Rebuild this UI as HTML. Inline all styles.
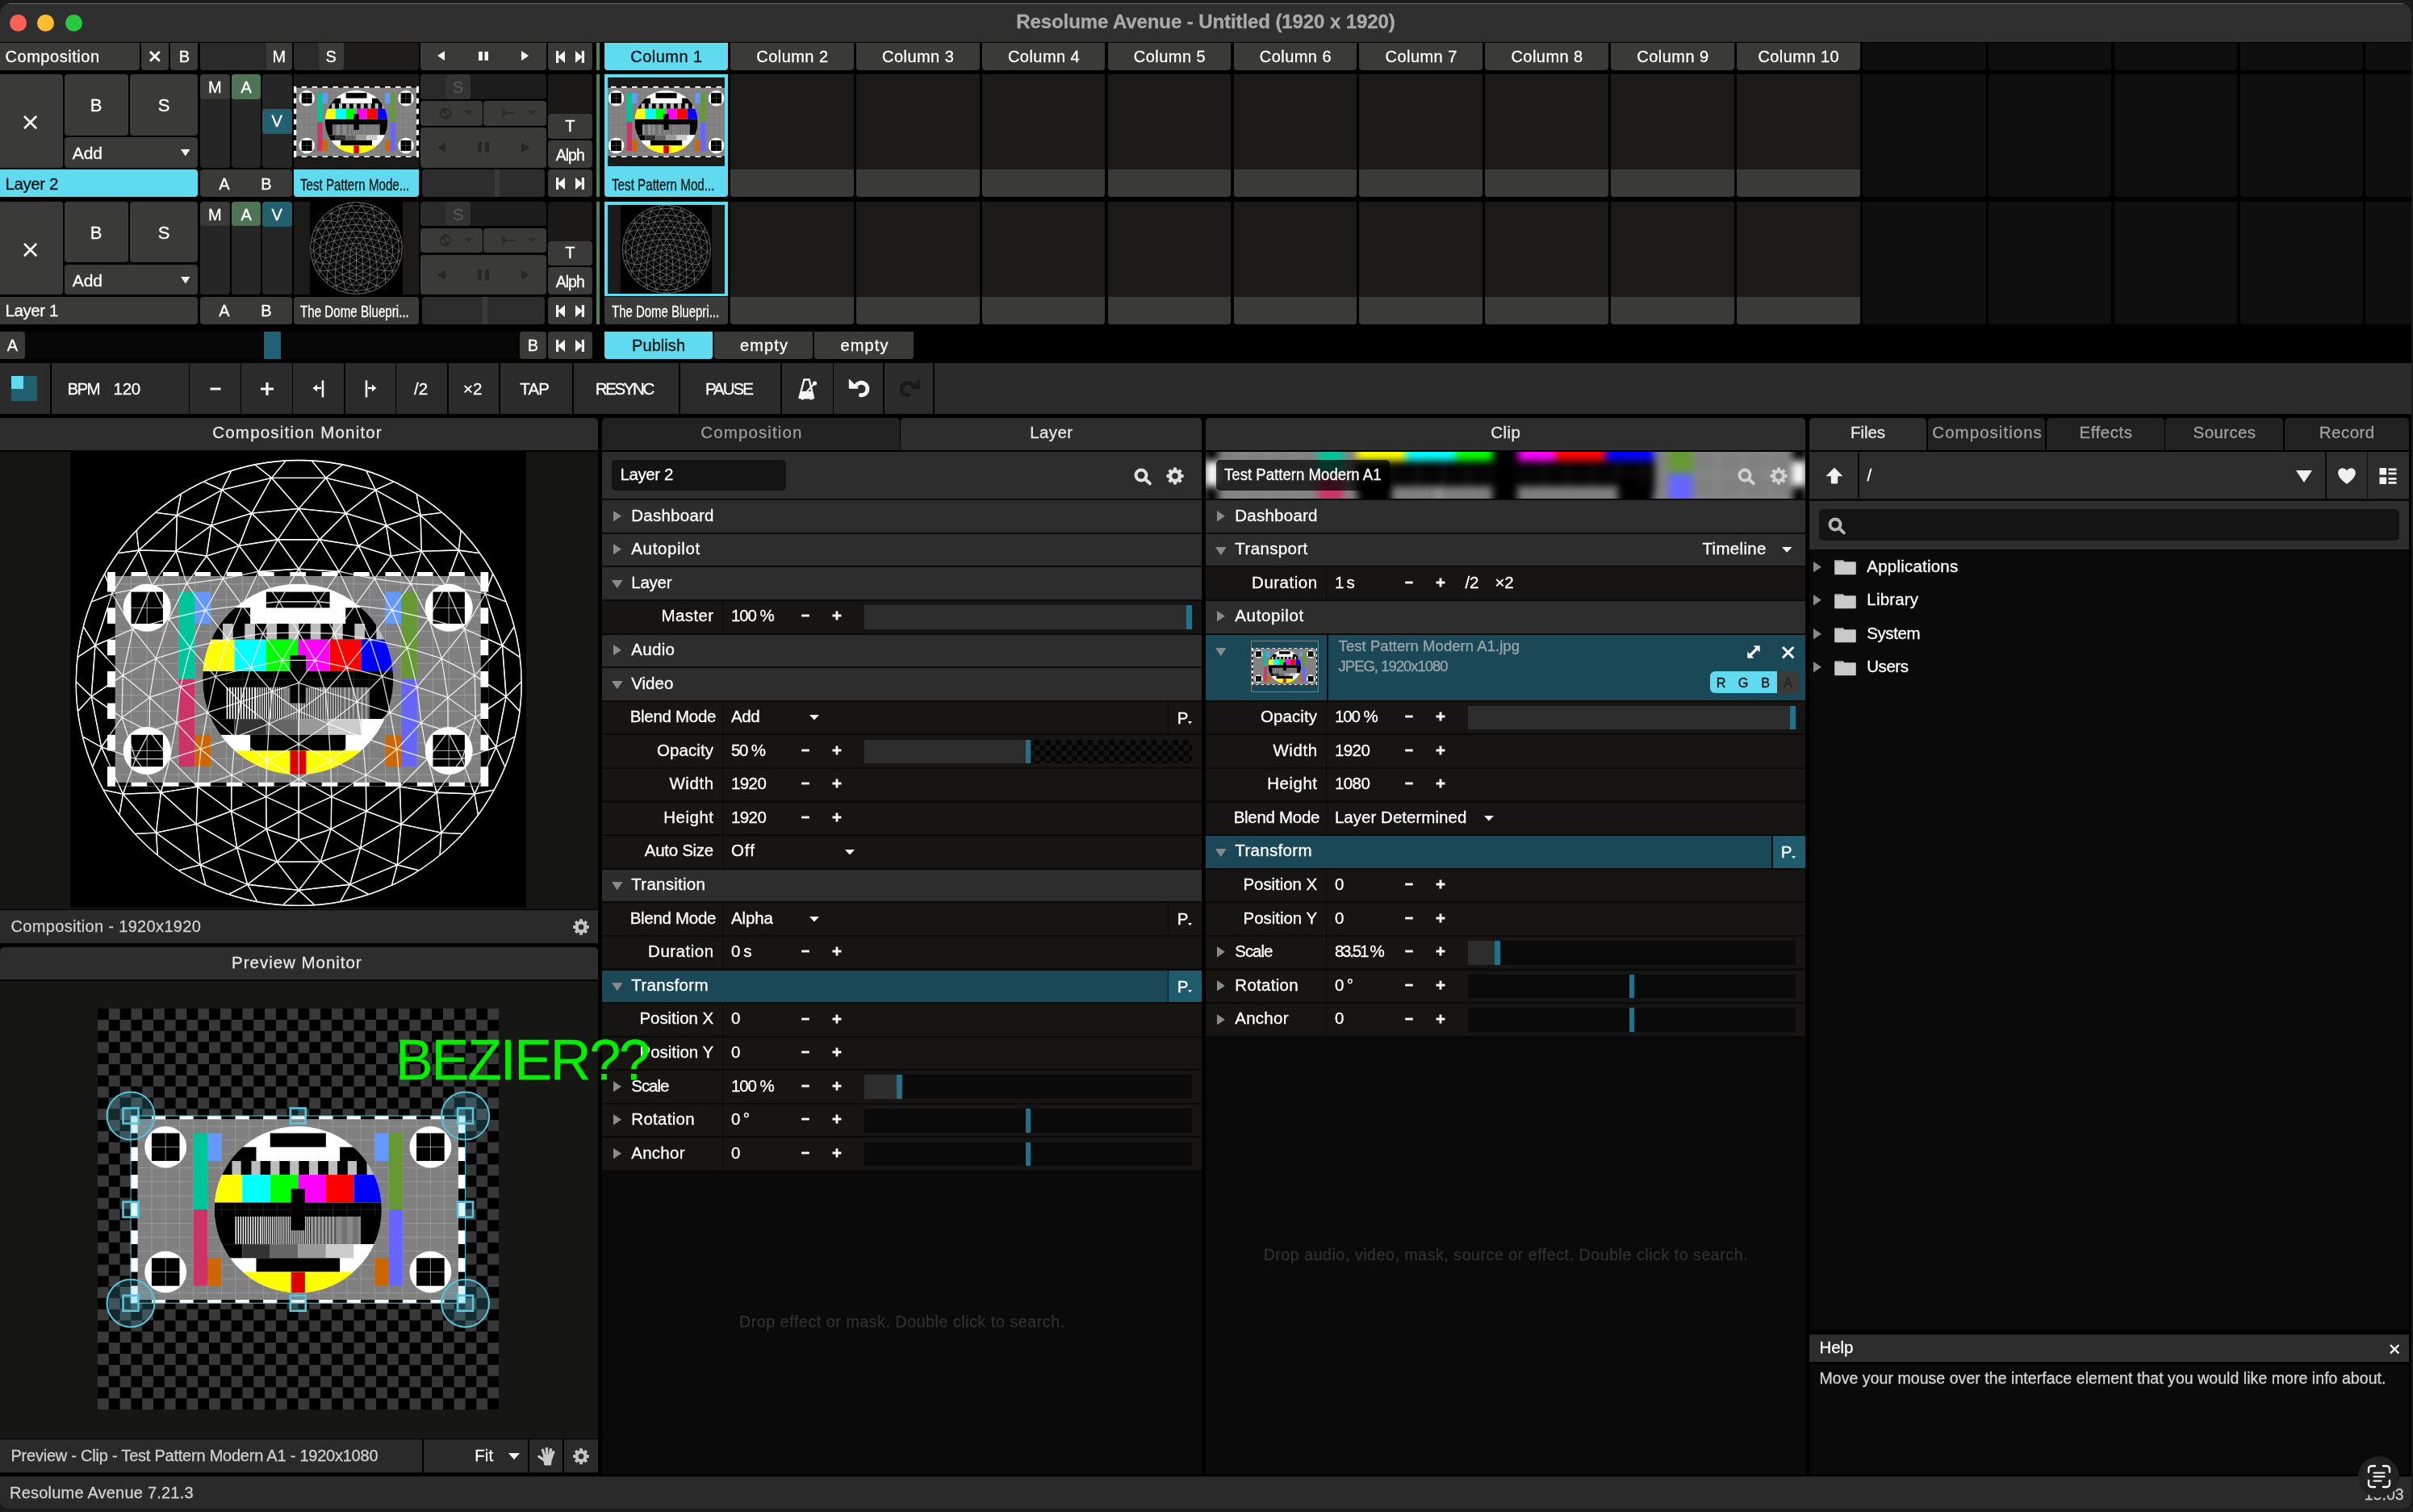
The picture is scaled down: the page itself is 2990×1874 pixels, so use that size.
<!DOCTYPE html><html><head><meta charset="utf-8"><title>Resolume Avenue - Untitled (1920 x 1920)</title><style>html,body{margin:0;padding:0}body{width:2990px;height:1874px;background:#1b1b1b;overflow:hidden;position:relative;font-family:"Liberation Sans",sans-serif}
#w{will-change:transform;position:absolute;left:0;top:4px;width:2988px;height:1866px;background:#000;border-radius:13px 13px 10px 10px;overflow:hidden}
#w div,#w svg{position:absolute}
.t{white-space:nowrap;overflow:visible;-webkit-text-stroke:.3px}
</style></head><body><svg width="0" height="0" style="position:absolute"><defs><symbol id="tp" viewBox="0 0 1920 1080" preserveAspectRatio="none"><rect width="1920" height="1080" fill="#808080"/><path d="M40 0V1080M120 0V1080M200 0V1080M280 0V1080M360 0V1080M440 0V1080M520 0V1080M600 0V1080M680 0V1080M760 0V1080M840 0V1080M920 0V1080M1000 0V1080M1080 0V1080M1160 0V1080M1240 0V1080M1320 0V1080M1400 0V1080M1480 0V1080M1560 0V1080M1640 0V1080M1720 0V1080M1800 0V1080M1880 0V1080M0 60H1920M0 140H1920M0 220H1920M0 300H1920M0 380H1920M0 460H1920M0 540H1920M0 620H1920M0 700H1920M0 780H1920M0 860H1920M0 940H1920M0 1020H1920" stroke="#a3a3a3" stroke-width="3" fill="none"/><path d="M0 0H1920V1080H0Z M40 20V1060H1880V20Z" fill="#fff" fill-rule="evenodd"/><path d="M40 0h80v20h-80zM40 1060h80v20h-80zM200 0h80v20h-80zM200 1060h80v20h-80zM360 0h80v20h-80zM360 1060h80v20h-80zM520 0h80v20h-80zM520 1060h80v20h-80zM680 0h80v20h-80zM680 1060h80v20h-80zM840 0h80v20h-80zM840 1060h80v20h-80zM1000 0h80v20h-80zM1000 1060h80v20h-80zM1160 0h80v20h-80zM1160 1060h80v20h-80zM1320 0h80v20h-80zM1320 1060h80v20h-80zM1480 0h80v20h-80zM1480 1060h80v20h-80zM1640 0h80v20h-80zM1640 1060h80v20h-80zM1800 0h80v20h-80zM1800 1060h80v20h-80zM0 100h40v80h-40zM1880 100h40v80h-40zM0 260h40v80h-40zM1880 260h40v80h-40zM0 420h40v80h-40zM1880 420h40v80h-40zM0 580h40v80h-40zM1880 580h40v80h-40zM0 740h40v80h-40zM1880 740h40v80h-40zM0 900h40v80h-40zM1880 900h40v80h-40z" fill="#000"/><rect x="360" y="100" width="80" height="440" fill="#00c49a"/><rect x="440" y="100" width="80" height="160" fill="#6699ff"/><rect x="360" y="540" width="80" height="440" fill="#cc3366"/><rect x="440" y="820" width="80" height="160" fill="#cc6600"/><rect x="1400" y="100" width="80" height="160" fill="#6699ff"/><rect x="1480" y="100" width="80" height="440" fill="#669933"/><rect x="1480" y="540" width="80" height="440" fill="#6666ff"/><rect x="1400" y="820" width="80" height="160" fill="#cc6600"/><circle cx="200" cy="180" r="120" fill="#fff"/><rect x="120" y="100" width="160" height="160" fill="#000"/><path d="M120 180h160M200 100v160" stroke="#ddd" stroke-width="3"/><circle cx="1720" cy="180" r="120" fill="#fff"/><rect x="1640" y="100" width="160" height="160" fill="#000"/><path d="M1640 180h160M1720 100v160" stroke="#ddd" stroke-width="3"/><circle cx="200" cy="900" r="120" fill="#fff"/><rect x="120" y="820" width="160" height="160" fill="#000"/><path d="M120 900h160M200 820v160" stroke="#ddd" stroke-width="3"/><circle cx="1720" cy="900" r="120" fill="#fff"/><rect x="1640" y="820" width="160" height="160" fill="#000"/><path d="M1640 900h160M1720 820v160" stroke="#ddd" stroke-width="3"/><clipPath id="tpc"><circle cx="960" cy="540" r="480"/></clipPath><g clip-path="url(#tpc)"><rect x="480" y="60" width="960" height="960" fill="#fff"/><rect x="800" y="100" width="320" height="80" fill="#000"/><path d="M480 180H720V260H1200V180H1440V340H480Z" fill="#000"/><path d="M581 260h52v80h-52zM692 260h52v80h-52zM802 260h52v80h-52zM913 260h52v80h-52zM1023 260h52v80h-52zM1134 260h52v80h-52zM1245 260h52v80h-52zM1355 260h52v80h-52z" fill="#bdbdbd"/><rect x="480" y="340" width="160" height="160" fill="#ffff00"/><rect x="640" y="340" width="160" height="160" fill="#00ffff"/><rect x="800" y="340" width="160" height="160" fill="#00ff00"/><rect x="960" y="340" width="160" height="160" fill="#ff00ff"/><rect x="1120" y="340" width="160" height="160" fill="#ff0000"/><rect x="1280" y="340" width="160" height="160" fill="#0000ff"/><rect x="480" y="500" width="960" height="240" fill="#000"/><path d="M520 500V580M600 500V580M680 500V580M760 500V580M840 500V580M920 500V580M1000 500V580M1080 500V580M1160 500V580M1240 500V580M1320 500V580M1400 500V580M480 540H1440" stroke="#333" stroke-width="3" fill="none"/><path d="M600 660H744" stroke="#fff" stroke-width="160" stroke-dasharray="7 7"/><path d="M744 660H888" stroke="#fff" stroke-width="160" stroke-dasharray="5.5 5.5"/><path d="M888 660H1032" stroke="#fff" stroke-width="160" stroke-dasharray="4 4"/><path d="M1032 660H1176" stroke="#fff" stroke-width="160" stroke-dasharray="3 3"/><path d="M1176 660H1320" stroke="#fff" stroke-width="160" stroke-dasharray="2.5 2.5"/><rect x="480" y="740" width="160" height="80" fill="#000"/><rect x="640" y="740" width="160" height="80" fill="#333"/><rect x="800" y="740" width="160" height="80" fill="#666"/><rect x="960" y="740" width="160" height="80" fill="#999"/><rect x="1120" y="740" width="160" height="80" fill="#ccc"/><rect x="1280" y="740" width="160" height="80" fill="#fff"/><rect x="720" y="820" width="480" height="80" fill="#000"/><rect x="480" y="900" width="960" height="120" fill="#ffff00"/><rect x="920" y="900" width="80" height="120" fill="#e00000"/><rect x="920" y="420" width="80" height="240" fill="#000"/></g></symbol><g id="dome" fill="none" stroke="#fff"><circle r="100"/><path d="M-45.4 46.6L-30.3 57.6M-45.4 46.6L-46.0 63.4M-45.4 46.6L-30.1 41.4M-45.4 46.6L-61.9 49.2M-45.4 46.6L-44.0 29.7M-45.4 46.6L-57.9 34.0M-30.3 57.6L-46.0 63.4M-30.3 57.6L-30.1 41.4M-30.3 57.6L-27.7 74.1M-30.3 57.6L-14.7 51.1M-30.3 57.6L-14.5 65.6M-46.0 63.4L-61.9 49.2M-46.0 63.4L-27.7 74.1M-46.0 63.4L-64.0 67.3M-46.0 63.4L-44.2 81.7M-30.1 41.4L-44.0 29.7M-30.1 41.4L-14.7 51.1M-30.1 41.4L-28.6 24.3M-30.1 41.4L-14.3 34.7M-61.9 49.2L-57.9 34.0M-61.9 49.2L-64.0 67.3M-61.9 49.2L-73.3 34.1M-61.9 49.2L-78.9 49.9M-27.7 74.1L-14.5 65.6M-27.7 74.1L-44.2 81.7M-27.7 74.1L-9.8 80.3M-27.7 74.1L-23.0 90.5M-44.0 29.7L-57.9 34.0M-44.0 29.7L-28.6 24.3M-44.0 29.7L-55.0 17.9M-44.0 29.7L-41.0 13.3M-14.7 51.1L-14.5 65.6M-14.7 51.1L-14.3 34.7M-14.7 51.1L-0.0 57.8M-14.7 51.1L0.0 43.1M-57.9 34.0L-73.3 34.1M-57.9 34.0L-55.0 17.9M-57.9 34.0L-67.0 21.8M-14.5 65.6L-9.8 80.3M-14.5 65.6L-0.0 57.8M-14.5 65.6L0.0 70.5M-64.0 67.3L-44.2 81.7M-64.0 67.3L-78.9 49.9M-64.0 67.3L-63.4 77.0M-64.0 67.3L-73.3 67.7M-44.2 81.7L-23.0 90.5M-44.2 81.7L-53.7 84.1M-44.2 81.7L-41.8 90.7M-28.6 24.3L-14.3 34.7M-28.6 24.3L-41.0 13.3M-28.6 24.3L-13.3 18.3M-28.6 24.3L-26.1 8.5M-14.3 34.7L0.0 43.1M-14.3 34.7L-13.3 18.3M-14.3 34.7L-0.0 27.4M-73.3 34.1L-67.0 21.8M-73.3 34.1L-78.9 49.9M-73.3 34.1L-79.4 15.5M-73.3 34.1L-88.6 28.8M-9.8 80.3L0.0 70.5M-9.8 80.3L-23.0 90.5M-9.8 80.3L9.8 80.3M-9.8 80.3L0.0 93.1M-55.0 17.9L-67.0 21.8M-55.0 17.9L-41.0 13.3M-55.0 17.9L-66.9 6.5M-55.0 17.9L-53.1 1.8M-0.0 57.8L0.0 70.5M-0.0 57.8L0.0 43.1M-0.0 57.8L14.5 65.6M-0.0 57.8L14.7 51.1M-67.0 21.8L-79.4 15.5M-67.0 21.8L-66.9 6.5M0.0 70.5L9.8 80.3M0.0 70.5L14.5 65.6M-78.9 49.9L-80.5 59.0M-78.9 49.9L-88.6 28.8M-78.9 49.9L-87.5 48.1M-23.0 90.5L-31.2 94.8M-23.0 90.5L0.0 93.1M-23.0 90.5L-18.7 98.1M-41.0 13.3L-26.1 8.5M-41.0 13.3L-53.1 1.8M-41.0 13.3L-37.4 -2.9M0.0 43.1L-0.0 27.4M0.0 43.1L14.7 51.1M0.0 43.1L14.3 34.7M-13.3 18.3L-26.1 8.5M-13.3 18.3L-0.0 27.4M-13.3 18.3L-12.0 3.9M-13.3 18.3L0.0 12.6M-26.1 8.5L-37.4 -2.9M-26.1 8.5L-12.0 3.9M-26.1 8.5L-21.5 -7.0M-0.0 27.4L14.3 34.7M-0.0 27.4L0.0 12.6M-0.0 27.4L13.3 18.3M-79.4 15.5L-66.9 6.5M-79.4 15.5L-88.6 28.8M-79.4 15.5L-79.0 -3.4M-79.4 15.5L-93.1 6.1M9.8 80.3L14.5 65.6M9.8 80.3L0.0 93.1M9.8 80.3L27.7 74.1M9.8 80.3L23.0 90.5M-66.9 6.5L-53.1 1.8M-66.9 6.5L-79.0 -3.4M-66.9 6.5L-64.1 -11.0M14.5 65.6L14.7 51.1M14.5 65.6L27.7 74.1M14.5 65.6L30.3 57.6M-88.6 28.8L-92.5 37.4M-88.6 28.8L-93.1 6.1M-88.6 28.8L-96.8 24.2M0.0 93.1L-6.9 99.5M0.0 93.1L23.0 90.5M0.0 93.1L6.9 99.5M-53.1 1.8L-37.4 -2.9M-53.1 1.8L-64.1 -11.0M-53.1 1.8L-48.7 -15.8M14.7 51.1L14.3 34.7M14.7 51.1L30.3 57.6M14.7 51.1L30.1 41.4M-37.4 -2.9L-21.5 -7.0M-37.4 -2.9L-48.7 -15.8M-37.4 -2.9L-31.9 -19.7M14.3 34.7L13.3 18.3M14.3 34.7L30.1 41.4M14.3 34.7L28.6 24.3M-12.0 3.9L0.0 12.6M-12.0 3.9L-21.5 -7.0M-12.0 3.9L-0.0 0.0M-12.0 3.9L-7.4 -10.2M0.0 12.6L13.3 18.3M0.0 12.6L-0.0 0.0M0.0 12.6L12.0 3.9M-79.0 -3.4L-93.1 6.1M-79.0 -3.4L-64.1 -11.0M-79.0 -3.4L-91.4 -16.8M-79.0 -3.4L-74.5 -24.2M27.7 74.1L23.0 90.5M27.7 74.1L30.3 57.6M27.7 74.1L44.2 81.7M27.7 74.1L46.0 63.4M-93.1 6.1L-99.0 12.5M-93.1 6.1L-91.4 -16.8M-93.1 6.1L-99.8 -0.4M23.0 90.5L18.7 98.1M23.0 90.5L44.2 81.7M23.0 90.5L31.2 94.8M-64.1 -11.0L-48.7 -15.8M-64.1 -11.0L-74.5 -24.2M-64.1 -11.0L-58.3 -28.8M30.3 57.6L30.1 41.4M30.3 57.6L46.0 63.4M30.3 57.6L45.4 46.6M-21.5 -7.0L-31.9 -19.7M-21.5 -7.0L-7.4 -10.2M-21.5 -7.0L-16.1 -22.2M13.3 18.3L28.6 24.3M13.3 18.3L12.0 3.9M13.3 18.3L26.1 8.5M-48.7 -15.8L-31.9 -19.7M-48.7 -15.8L-58.3 -28.8M-48.7 -15.8L-41.9 -32.7M30.1 41.4L28.6 24.3M30.1 41.4L45.4 46.6M30.1 41.4L44.0 29.7M-0.0 0.0L-7.4 -10.2M-0.0 0.0L12.0 3.9M-0.0 0.0L7.4 -10.2M-31.9 -19.7L-16.1 -22.2M-31.9 -19.7L-41.9 -32.7M-31.9 -19.7L-25.3 -34.8M28.6 24.3L26.1 8.5M28.6 24.3L44.0 29.7M28.6 24.3L41.0 13.3M-7.4 -10.2L-16.1 -22.2M-7.4 -10.2L7.4 -10.2M-7.4 -10.2L-0.0 -22.7M12.0 3.9L26.1 8.5M12.0 3.9L7.4 -10.2M12.0 3.9L21.5 -7.0M-91.4 -16.8L-74.5 -24.2M-91.4 -16.8L-99.1 -11.7M-91.4 -16.8L-83.8 -40.1M-91.4 -16.8L-96.6 -25.1M44.2 81.7L46.0 63.4M44.2 81.7L41.8 90.7M44.2 81.7L64.0 67.3M44.2 81.7L53.7 84.1M-74.5 -24.2L-58.3 -28.8M-74.5 -24.2L-83.8 -40.1M-74.5 -24.2L-65.9 -43.7M46.0 63.4L45.4 46.6M46.0 63.4L64.0 67.3M46.0 63.4L61.9 49.2M-58.3 -28.8L-41.9 -32.7M-58.3 -28.8L-65.9 -43.7M-58.3 -28.8L-50.3 -44.6M45.4 46.6L44.0 29.7M45.4 46.6L61.9 49.2M45.4 46.6L57.9 34.0M-16.1 -22.2L-0.0 -22.7M-16.1 -22.2L-25.3 -34.8M-16.1 -22.2L-8.8 -36.5M26.1 8.5L21.5 -7.0M26.1 8.5L41.0 13.3M26.1 8.5L37.4 -2.9M7.4 -10.2L-0.0 -22.7M7.4 -10.2L21.5 -7.0M7.4 -10.2L16.1 -22.2M-41.9 -32.7L-25.3 -34.8M-41.9 -32.7L-50.3 -44.6M-41.9 -32.7L-34.0 -46.8M44.0 29.7L41.0 13.3M44.0 29.7L57.9 34.0M44.0 29.7L55.0 17.9M-0.0 -22.7L-8.8 -36.5M-0.0 -22.7L16.1 -22.2M-0.0 -22.7L8.8 -36.5M21.5 -7.0L37.4 -2.9M21.5 -7.0L16.1 -22.2M21.5 -7.0L31.9 -19.7M-25.3 -34.8L-8.8 -36.5M-25.3 -34.8L-34.0 -46.8M-25.3 -34.8L-18.1 -50.0M41.0 13.3L37.4 -2.9M41.0 13.3L55.0 17.9M41.0 13.3L53.1 1.8M-83.8 -40.1L-92.9 -36.5M-83.8 -40.1L-65.9 -43.7M-83.8 -40.1L-87.1 -48.8M-83.8 -40.1L-71.8 -59.6M64.0 67.3L63.4 77.0M64.0 67.3L61.9 49.2M64.0 67.3L73.3 67.7M64.0 67.3L78.9 49.9M-65.9 -43.7L-50.3 -44.6M-65.9 -43.7L-71.8 -59.6M-65.9 -43.7L-55.1 -59.2M61.9 49.2L57.9 34.0M61.9 49.2L78.9 49.9M61.9 49.2L73.3 34.1M-50.3 -44.6L-34.0 -46.8M-50.3 -44.6L-55.1 -59.2M-50.3 -44.6L-41.4 -57.0M57.9 34.0L55.0 17.9M57.9 34.0L73.3 34.1M57.9 34.0L67.0 21.8M-8.8 -36.5L-18.1 -50.0M-8.8 -36.5L8.8 -36.5M-8.8 -36.5L-0.0 -51.2M37.4 -2.9L53.1 1.8M37.4 -2.9L31.9 -19.7M37.4 -2.9L48.7 -15.8M16.1 -22.2L8.8 -36.5M16.1 -22.2L31.9 -19.7M16.1 -22.2L25.3 -34.8M-34.0 -46.8L-41.4 -57.0M-34.0 -46.8L-18.1 -50.0M-34.0 -46.8L-26.8 -61.6M55.0 17.9L67.0 21.8M55.0 17.9L53.1 1.8M55.0 17.9L66.9 6.5M-71.8 -59.6L-81.0 -58.3M78.9 49.9L80.5 59.0M-71.8 -59.6L-55.1 -59.2M-71.8 -59.6L-54.7 -75.3M-71.8 -59.6L-72.8 -68.3M78.9 49.9L73.3 34.1M78.9 49.9L88.6 28.8M78.9 49.9L87.5 48.1M-55.1 -59.2L-41.4 -57.0M-55.1 -59.2L-39.3 -70.7M-55.1 -59.2L-54.7 -75.3M73.3 34.1L67.0 21.8M73.3 34.1L79.4 15.5M73.3 34.1L88.6 28.8M-41.4 -57.0L-26.8 -61.6M-41.4 -57.0L-39.3 -70.7M67.0 21.8L66.9 6.5M67.0 21.8L79.4 15.5M-18.1 -50.0L-26.8 -61.6M-18.1 -50.0L-0.0 -51.2M-18.1 -50.0L-9.4 -64.4M53.1 1.8L66.9 6.5M53.1 1.8L48.7 -15.8M53.1 1.8L64.1 -11.0M8.8 -36.5L25.3 -34.8M8.8 -36.5L-0.0 -51.2M8.8 -36.5L18.1 -50.0M31.9 -19.7L25.3 -34.8M31.9 -19.7L48.7 -15.8M31.9 -19.7L41.9 -32.7M-26.8 -61.6L-39.3 -70.7M-26.8 -61.6L-9.4 -64.4M-26.8 -61.6L-21.1 -76.2M66.9 6.5L79.4 15.5M66.9 6.5L64.1 -11.0M66.9 6.5L79.0 -3.4M25.3 -34.8L18.1 -50.0M25.3 -34.8L41.9 -32.7M25.3 -34.8L34.0 -46.8M-0.0 -51.2L-9.4 -64.4M-0.0 -51.2L18.1 -50.0M-0.0 -51.2L9.4 -64.4M48.7 -15.8L64.1 -11.0M48.7 -15.8L41.9 -32.7M48.7 -15.8L58.3 -28.8M-39.3 -70.7L-54.7 -75.3M-39.3 -70.7L-21.1 -76.2M-39.3 -70.7L-34.5 -86.7M79.4 15.5L88.6 28.8M79.4 15.5L79.0 -3.4M79.4 15.5L93.1 6.1M-54.7 -75.3L-64.1 -76.5M-54.7 -75.3L-34.5 -86.7M-54.7 -75.3L-52.9 -84.6M88.6 28.8L92.5 37.4M88.6 28.8L93.1 6.1M88.6 28.8L96.8 24.2M-9.4 -64.4L-21.1 -76.2M-9.4 -64.4L9.4 -64.4M-9.4 -64.4L-0.0 -78.3M64.1 -11.0L79.0 -3.4M64.1 -11.0L58.3 -28.8M64.1 -11.0L74.5 -24.2M18.1 -50.0L34.0 -46.8M18.1 -50.0L9.4 -64.4M18.1 -50.0L26.8 -61.6M41.9 -32.7L34.0 -46.8M41.9 -32.7L58.3 -28.8M41.9 -32.7L50.3 -44.6M-21.1 -76.2L-34.5 -86.7M-21.1 -76.2L-0.0 -78.3M-21.1 -76.2L-12.2 -92.1M79.0 -3.4L93.1 6.1M79.0 -3.4L74.5 -24.2M79.0 -3.4L91.4 -16.8M34.0 -46.8L26.8 -61.6M34.0 -46.8L50.3 -44.6M34.0 -46.8L41.4 -57.0M9.4 -64.4L26.8 -61.6M9.4 -64.4L-0.0 -78.3M9.4 -64.4L21.1 -76.2M58.3 -28.8L50.3 -44.6M58.3 -28.8L74.5 -24.2M58.3 -28.8L65.9 -43.7M-34.5 -86.7L-42.5 -90.3M-34.5 -86.7L-12.2 -92.1M-34.5 -86.7L-30.4 -95.0M93.1 6.1L99.0 12.5M93.1 6.1L91.4 -16.8M93.1 6.1L99.8 -0.4M26.8 -61.6L41.4 -57.0M26.8 -61.6L21.1 -76.2M26.8 -61.6L39.3 -70.7M50.3 -44.6L41.4 -57.0M50.3 -44.6L65.9 -43.7M50.3 -44.6L55.1 -59.2M-0.0 -78.3L-12.2 -92.1M-0.0 -78.3L21.1 -76.2M-0.0 -78.3L12.2 -92.1M74.5 -24.2L91.4 -16.8M74.5 -24.2L65.9 -43.7M74.5 -24.2L83.8 -40.1M41.4 -57.0L39.3 -70.7M41.4 -57.0L55.1 -59.2M-12.2 -92.1L-19.5 -97.9M-12.2 -92.1L12.2 -92.1M-12.2 -92.1L-6.0 -99.6M91.4 -16.8L99.1 -11.7M91.4 -16.8L83.8 -40.1M91.4 -16.8L96.6 -25.1M21.1 -76.2L39.3 -70.7M21.1 -76.2L12.2 -92.1M21.1 -76.2L34.5 -86.7M65.9 -43.7L55.1 -59.2M65.9 -43.7L83.8 -40.1M65.9 -43.7L71.8 -59.6M39.3 -70.7L55.1 -59.2M39.3 -70.7L34.5 -86.7M39.3 -70.7L54.7 -75.3M55.1 -59.2L71.8 -59.6M55.1 -59.2L54.7 -75.3M12.2 -92.1L6.0 -99.6M12.2 -92.1L34.5 -86.7M12.2 -92.1L19.5 -97.9M83.8 -40.1L92.9 -36.5M83.8 -40.1L71.8 -59.6M83.8 -40.1L87.1 -48.8M34.5 -86.7L54.7 -75.3M34.5 -86.7L30.4 -95.0M34.5 -86.7L42.5 -90.3M71.8 -59.6L54.7 -75.3M71.8 -59.6L81.0 -58.3M71.8 -59.6L72.8 -68.3M54.7 -75.3L52.9 -84.6M54.7 -75.3L64.1 -76.5"/></g></defs></svg><div id="w">
<div style="left:0px;top:0px;width:2988px;height:48px;background:#2f2f2f;box-shadow:inset 0 1px 0 rgba(255,255,255,.28);"></div>
<div style="left:11.9px;top:13.7px;width:21px;height:21px;background:#fe5f57;border-radius:11px;"></div>
<div style="left:46.3px;top:13.7px;width:21px;height:21px;background:#febc2e;border-radius:11px;"></div>
<div style="left:80.9px;top:13.7px;width:21px;height:21px;background:#28c840;border-radius:11px;"></div>
<div class="t" style="left:1094px;top:5.3px;width:800px;height:36px;line-height:36px;color:#aaaaaa;font-size:24px;text-align:center;font-weight:bold;letter-spacing:-0.09px;padding-left:-0.09px;">Resolume Avenue - Untitled (1920 x 1920)</div>
<div style="left:0px;top:49.4px;width:172.7px;height:33.3px;background:#3a3a38;border-radius:0 0 4px 0;"></div>
<div class="t" style="left:0px;top:50.1px;width:172.7px;height:33.3px;line-height:33.3px;color:#fff;font-size:20px;padding-left:6.5px;box-sizing:border-box;letter-spacing:0.54px;">Composition</div>
<div style="left:175px;top:49.4px;width:33.8px;height:33.3px;background:#3a3a38;border-radius:0 0 4px 4px;"></div>
<svg style="left:184px;top:58.1px;" width="15.8" height="15.8" viewBox="0 0 15.8 15.8"><path d="M2 2L13.8 13.8M13.8 2L2 13.8" stroke="#f4f4f4" stroke-width="3" fill="none"/></svg>
<div style="left:211.3px;top:49.4px;width:34px;height:33.3px;background:#3a3a38;border-radius:0 0 4px 4px;"></div>
<div class="t" style="left:211.3px;top:50.1px;width:34px;height:33.3px;line-height:33.3px;color:#fff;font-size:20px;text-align:center;">B</div>
<div style="left:247.5px;top:49.4px;width:114px;height:33.3px;background:#2a2a2a;border-radius:0 0 4px 4px;"></div>
<div style="left:330px;top:49.4px;width:31.5px;height:33.3px;background:#3a3a38;border-radius:0 0 4px 4px;"></div>
<div class="t" style="left:330px;top:50.1px;width:31.5px;height:33.3px;line-height:33.3px;color:#fff;font-size:20px;text-align:center;">M</div>
<div style="left:363.8px;top:49.4px;width:155.2px;height:33.3px;background:#1c1b1a;border-radius:0 0 4px 4px;"></div>
<div style="left:363.8px;top:49.4px;width:30.8px;height:33.3px;background:#2a2a2a;border-radius:0 0 0 4px;"></div>
<div style="left:394.6px;top:49.4px;width:31.2px;height:33.3px;background:#3a3a38;border-radius:0 0 4px 4px;"></div>
<div class="t" style="left:394.6px;top:50.1px;width:31.2px;height:33.3px;line-height:33.3px;color:#fff;font-size:20px;text-align:center;">S</div>
<div style="left:521px;top:49.4px;width:155.6px;height:33.3px;background:#3a3a38;border-radius:0 0 4px 4px;"></div>
<svg style="left:542.1px;top:59.4px;" width="9.3" height="12.2" viewBox="0 0 9.3 12.2"><path d="M9.3 0V12.2L0 6.1Z" fill="#f4f4f4"/></svg>
<svg style="left:592.8px;top:59.6px;" width="12.4" height="11.9" viewBox="0 0 12.4 11.9"><path d="M0 0h4.9v11.9h-4.9zM7.5 0h4.9v11.9h-4.9z" fill="#f4f4f4"/></svg>
<svg style="left:646px;top:59.4px;" width="9.3" height="12.2" viewBox="0 0 9.3 12.2"><path d="M0 0V12.2L9.3 6.1Z" fill="#f4f4f4"/></svg>
<div style="left:678.6px;top:49.4px;width:55.3px;height:33.3px;background:#3a3a38;border-radius:0 0 4px 4px;"></div>
<svg style="left:688.5px;top:59px;" width="11" height="15" viewBox="0 0 11 15"><path d="M0 0h3.2v15h-3.2zM11 0V15L2.4 7.5Z" fill="#f4f4f4"/></svg>
<svg style="left:713px;top:59px;" width="11" height="15" viewBox="0 0 11 15"><path d="M7.8 0h3.2v15h-3.2zM0 0V15L8.6 7.5Z" fill="#f4f4f4"/></svg>
<div style="left:738.8px;top:49.4px;width:3.9px;height:33.3px;background:#527d5f;"></div>
<div style="left:749.2px;top:49.4px;width:152.7px;height:33.3px;background:#5fdaee;border-radius:0 0 4px 4px;"></div>
<div class="t" style="left:749.2px;top:50.1px;width:152.7px;height:33.3px;line-height:33.3px;color:#111;font-size:20px;text-align:center;letter-spacing:0.45px;padding-left:0.45px;">Column 1</div>
<div style="left:905.1px;top:49.4px;width:152.7px;height:33.3px;background:#3a3a38;border-radius:0 0 4px 4px;"></div>
<div class="t" style="left:905.1px;top:50.1px;width:152.7px;height:33.3px;line-height:33.3px;color:#fff;font-size:20px;text-align:center;letter-spacing:0.45px;padding-left:0.45px;">Column 2</div>
<div style="left:1060.9px;top:49.4px;width:152.7px;height:33.3px;background:#3a3a38;border-radius:0 0 4px 4px;"></div>
<div class="t" style="left:1060.9px;top:50.1px;width:152.7px;height:33.3px;line-height:33.3px;color:#fff;font-size:20px;text-align:center;letter-spacing:0.45px;padding-left:0.45px;">Column 3</div>
<div style="left:1216.8px;top:49.4px;width:152.7px;height:33.3px;background:#3a3a38;border-radius:0 0 4px 4px;"></div>
<div class="t" style="left:1216.8px;top:50.1px;width:152.7px;height:33.3px;line-height:33.3px;color:#fff;font-size:20px;text-align:center;letter-spacing:0.45px;padding-left:0.45px;">Column 4</div>
<div style="left:1372.7px;top:49.4px;width:152.7px;height:33.3px;background:#3a3a38;border-radius:0 0 4px 4px;"></div>
<div class="t" style="left:1372.7px;top:50.1px;width:152.7px;height:33.3px;line-height:33.3px;color:#fff;font-size:20px;text-align:center;letter-spacing:0.45px;padding-left:0.45px;">Column 5</div>
<div style="left:1528.6px;top:49.4px;width:152.7px;height:33.3px;background:#3a3a38;border-radius:0 0 4px 4px;"></div>
<div class="t" style="left:1528.6px;top:50.1px;width:152.7px;height:33.3px;line-height:33.3px;color:#fff;font-size:20px;text-align:center;letter-spacing:0.45px;padding-left:0.45px;">Column 6</div>
<div style="left:1684.4px;top:49.4px;width:152.7px;height:33.3px;background:#3a3a38;border-radius:0 0 4px 4px;"></div>
<div class="t" style="left:1684.4px;top:50.1px;width:152.7px;height:33.3px;line-height:33.3px;color:#fff;font-size:20px;text-align:center;letter-spacing:0.45px;padding-left:0.45px;">Column 7</div>
<div style="left:1840.3px;top:49.4px;width:152.7px;height:33.3px;background:#3a3a38;border-radius:0 0 4px 4px;"></div>
<div class="t" style="left:1840.3px;top:50.1px;width:152.7px;height:33.3px;line-height:33.3px;color:#fff;font-size:20px;text-align:center;letter-spacing:0.45px;padding-left:0.45px;">Column 8</div>
<div style="left:1996.2px;top:49.4px;width:152.7px;height:33.3px;background:#3a3a38;border-radius:0 0 4px 4px;"></div>
<div class="t" style="left:1996.2px;top:50.1px;width:152.7px;height:33.3px;line-height:33.3px;color:#fff;font-size:20px;text-align:center;letter-spacing:0.45px;padding-left:0.45px;">Column 9</div>
<div style="left:2152px;top:49.4px;width:152.7px;height:33.3px;background:#3a3a38;border-radius:0 0 4px 4px;"></div>
<div class="t" style="left:2152px;top:50.1px;width:152.7px;height:33.3px;line-height:33.3px;color:#fff;font-size:20px;text-align:center;letter-spacing:0.45px;padding-left:0.45px;">Column 10</div>
<div style="left:2307.9px;top:49.4px;width:152.7px;height:33.3px;background:#0f0f0f;border-radius:0 0 4px 4px;"></div>
<div style="left:2463.8px;top:49.4px;width:152.7px;height:33.3px;background:#0f0f0f;border-radius:0 0 4px 4px;"></div>
<div style="left:2619.6px;top:49.4px;width:152.7px;height:33.3px;background:#0f0f0f;border-radius:0 0 4px 4px;"></div>
<div style="left:2775.5px;top:49.4px;width:152.7px;height:33.3px;background:#0f0f0f;border-radius:0 0 4px 4px;"></div>
<div style="left:2931.4px;top:49.4px;width:56.6px;height:33.3px;background:#0f0f0f;border-radius:0 0 4px 4px;"></div>
<div style="left:0px;top:88.2px;width:77.8px;height:115.4px;background:#3a3a38;border-radius:0 4px 4px 0;"></div>
<svg style="left:28.4px;top:137.9px;" width="19.2" height="19.2" viewBox="0 0 19.2 19.2"><path d="M2 2L17.2 17.2M17.2 2L2 17.2" stroke="#f4f4f4" stroke-width="2.7" fill="none"/></svg>
<div style="left:79.7px;top:88.2px;width:79px;height:75.4px;background:#3a3a38;border-radius:4px;"></div>
<div class="t" style="left:79.7px;top:88.9px;width:79px;height:75.4px;line-height:75.4px;color:#fff;font-size:22px;text-align:center;">B</div>
<div style="left:161px;top:88.2px;width:84.3px;height:75.4px;background:#3a3a38;border-radius:4px;"></div>
<div class="t" style="left:161px;top:88.9px;width:84.3px;height:75.4px;line-height:75.4px;color:#fff;font-size:22px;text-align:center;">S</div>
<div style="left:79.7px;top:166.2px;width:165.6px;height:37.4px;background:#3a3a38;border-radius:4px;"></div>
<div class="t" style="left:79.7px;top:166.9px;width:165.6px;height:37.4px;line-height:37.4px;color:#fff;font-size:21px;padding-left:10px;box-sizing:border-box;">Add</div>
<svg style="left:223.8px;top:181.4px;" width="11.5" height="8.5" viewBox="0 0 11.5 8.5"><path d="M0 0H11.5L5.8 8.5Z" fill="#f4f4f4"/></svg>
<div style="left:247.5px;top:88.2px;width:37.8px;height:115.4px;background:#262626;border-radius:4px;"></div>
<div style="left:287.2px;top:88.2px;width:35.8px;height:115.4px;background:#262626;border-radius:4px;"></div>
<div style="left:325px;top:88.2px;width:36.5px;height:115.4px;background:#262626;border-radius:4px;"></div>
<div style="left:247.5px;top:88.2px;width:37.8px;height:30.5px;background:#3a3a38;border-radius:4px;"></div>
<div class="t" style="left:247.5px;top:88.9px;width:37.8px;height:30.5px;line-height:30.5px;color:#fff;font-size:20px;text-align:center;">M</div>
<div style="left:287.2px;top:88.2px;width:35.8px;height:30.5px;background:#4f7455;border-radius:4px;"></div>
<div class="t" style="left:287.2px;top:88.9px;width:35.8px;height:30.5px;line-height:30.5px;color:#fff;font-size:20px;text-align:center;">A</div>
<div style="left:325px;top:130.7px;width:36.5px;height:31px;background:#22606f;border-radius:4px;"></div>
<div class="t" style="left:325px;top:131.4px;width:36.5px;height:31px;line-height:31px;color:#fff;font-size:20px;text-align:center;">V</div>
<div style="left:363.8px;top:88.2px;width:155.2px;height:115.4px;background:#1c1b1a;"></div>
<svg style="left:363.8px;top:102.8px;" width="155.2" height="88.2" viewBox="0 0 155.2 88.2"><use href="#tp" width="155.2" height="88.2"/></svg>
<div style="left:521px;top:88.2px;width:155.6px;height:30.5px;background:#1c1c1c;border-radius:4px;"></div>
<div style="left:521px;top:88.2px;width:31px;height:30.5px;background:#2a2a2a;border-radius:4px 0 0 4px;"></div>
<div style="left:552px;top:88.2px;width:31.1px;height:30.5px;background:#333;border-radius:4px;"></div>
<div class="t" style="left:552px;top:88.9px;width:31.1px;height:30.5px;line-height:30.5px;color:#565656;font-size:20px;text-align:center;">S</div>
<div style="left:521px;top:121.1px;width:77.3px;height:30.7px;background:#3a3a38;border-radius:4px;"></div>
<div style="left:599.2px;top:121.1px;width:77.4px;height:30.7px;background:#3a3a38;border-radius:4px;"></div>
<svg style="left:542px;top:126.7px;" width="20" height="19" viewBox="0 0 20 19"><ellipse cx="10" cy="9.8" rx="6.4" ry="5.6" fill="none" stroke="#2b2b2a" stroke-width="2.5"/><path d="M5.6 8.4C7 5.6 9.6 7 10 9.8S13 14 14.4 11.2" fill="none" stroke="#2b2b2a" stroke-width="2.3"/><path d="M7.8 1.6l5 2.4-4.4 3zM12.2 18l-5-2.400 4.400-3z" fill="#2b2b2a"/></svg>
<svg style="left:576.3px;top:133.2px;" width="10" height="5.6" viewBox="0 0 10 5.6"><path d="M0 0H10L5 5.6Z" fill="#2b2b2a"/></svg>
<svg style="left:621px;top:129.2px;" width="18" height="14" viewBox="0 0 18 14"><path d="M1 0.5V13.5L8 7Z" fill="#2b2b2a"/><path d="M6 7H17" stroke="#2b2b2a" stroke-width="2"/></svg>
<svg style="left:654.3px;top:133.2px;" width="10" height="5.6" viewBox="0 0 10 5.6"><path d="M0 0H10L5 5.6Z" fill="#2b2b2a"/></svg>
<div style="left:521px;top:154.2px;width:155.6px;height:49.4px;background:#3a3a38;border-radius:4px;"></div>
<svg style="left:541.7px;top:171.9px;" width="10.2" height="13.4" viewBox="0 0 10.2 13.4"><path d="M10.2 0V13.4L0 6.7Z" fill="#272726"/></svg>
<svg style="left:592px;top:171.9px;" width="14" height="13.4" viewBox="0 0 14 13.4"><path d="M0 0h4.9v13.4h-4.9zM9.1 0h4.9v13.4h-4.9z" fill="#272726"/></svg>
<svg style="left:645.7px;top:171.9px;" width="10.2" height="13.4" viewBox="0 0 10.2 13.4"><path d="M0 0V13.4L10.2 6.7Z" fill="#272726"/></svg>
<div style="left:678.6px;top:88.2px;width:55.3px;height:49.5px;background:#1a1918;border-radius:4px;"></div>
<div style="left:678.6px;top:137.2px;width:55.3px;height:30.5px;background:#3a3a38;border-radius:4px;"></div>
<div class="t" style="left:678.6px;top:136.7px;width:55.3px;height:30.5px;line-height:30.5px;color:#fff;font-size:20px;text-align:center;">T</div>
<div style="left:678.6px;top:169.8px;width:55.3px;height:33.8px;background:#3a3a38;border-radius:4px;"></div>
<div class="t" style="left:678.6px;top:171.8px;width:55.3px;height:33.8px;line-height:33.8px;color:#fff;font-size:19.5px;text-align:center;letter-spacing:-1.01px;padding-left:-1.01px;">Alph</div>
<div style="left:738.8px;top:88.2px;width:3.9px;height:152px;background:#527d5f;"></div>
<div style="left:0px;top:206px;width:245.3px;height:34.2px;background:#5fdaee;border-radius:0 4px 4px 0;"></div>
<div class="t" style="left:0px;top:206.7px;width:245.3px;height:34.2px;line-height:34.2px;color:#111;font-size:20.5px;padding-left:6.5px;box-sizing:border-box;letter-spacing:-0.40px;">Layer 2</div>
<div style="left:247.5px;top:206px;width:114px;height:34.2px;background:#3a3a38;border-radius:4px;"></div>
<div class="t" style="left:262px;top:206.7px;width:32px;height:34.2px;line-height:34.2px;color:#fff;font-size:20px;text-align:center;">A</div>
<div class="t" style="left:314px;top:206.7px;width:32px;height:34.2px;line-height:34.2px;color:#fff;font-size:20px;text-align:center;">B</div>
<div style="left:363.8px;top:206px;width:155.2px;height:34.2px;background:#5fdaee;border-radius:0 0 4px 4px;"></div>
<div class="t" style="left:371.5px;top:207.7px;width:228.5px;height:34.2px;line-height:34.2px;color:#111;font-size:21px;transform:scaleX(0.720);transform-origin:left center;">Test Pattern Mode...</div>
<div style="left:522.7px;top:206px;width:152.3px;height:34.2px;background:#2d2d2d;border-radius:4px;"></div>
<div style="left:612.9px;top:206px;width:6.6px;height:34.2px;background:#3a3a3a;"></div>
<div style="left:678.6px;top:206px;width:55.3px;height:34.2px;background:#3a3a38;border-radius:4px;"></div>
<svg style="left:688.5px;top:216.1px;" width="11" height="15" viewBox="0 0 11 15"><path d="M0 0h3.2v15h-3.2zM11 0V15L2.4 7.5Z" fill="#f4f4f4"/></svg>
<svg style="left:713px;top:216.1px;" width="11" height="15" viewBox="0 0 11 15"><path d="M7.8 0h3.2v15h-3.2zM0 0V15L8.6 7.5Z" fill="#f4f4f4"/></svg>
<div style="left:749.2px;top:88.2px;width:152.7px;height:152px;background:#5fdaee;border-radius:0 0 4px 4px;"></div>
<div style="left:753px;top:92.2px;width:145.1px;height:109.5px;background:#1c1b1a;"></div>
<svg style="left:753px;top:103.2px;" width="145.1" height="88.2" viewBox="0 0 145.1 88.2"><use href="#tp" x="-5.8" width="156.7" height="88.2"/></svg>
<div class="t" style="left:757.8px;top:207.7px;width:221.4px;height:34.2px;line-height:34.2px;color:#111;font-size:21px;transform:scaleX(0.723);transform-origin:left center;">Test Pattern Mod...</div>
<div style="left:905.1px;top:88.2px;width:152.7px;height:152px;background:#1b1a19;border-radius:0 0 4px 4px;"></div>
<div style="left:905.1px;top:206px;width:152.7px;height:34.2px;background:#3a3a38;border-radius:0 0 4px 4px;"></div>
<div style="left:1060.9px;top:88.2px;width:152.7px;height:152px;background:#1b1a19;border-radius:0 0 4px 4px;"></div>
<div style="left:1060.9px;top:206px;width:152.7px;height:34.2px;background:#3a3a38;border-radius:0 0 4px 4px;"></div>
<div style="left:1216.8px;top:88.2px;width:152.7px;height:152px;background:#1b1a19;border-radius:0 0 4px 4px;"></div>
<div style="left:1216.8px;top:206px;width:152.7px;height:34.2px;background:#3a3a38;border-radius:0 0 4px 4px;"></div>
<div style="left:1372.7px;top:88.2px;width:152.7px;height:152px;background:#1b1a19;border-radius:0 0 4px 4px;"></div>
<div style="left:1372.7px;top:206px;width:152.7px;height:34.2px;background:#3a3a38;border-radius:0 0 4px 4px;"></div>
<div style="left:1528.6px;top:88.2px;width:152.7px;height:152px;background:#1b1a19;border-radius:0 0 4px 4px;"></div>
<div style="left:1528.6px;top:206px;width:152.7px;height:34.2px;background:#3a3a38;border-radius:0 0 4px 4px;"></div>
<div style="left:1684.4px;top:88.2px;width:152.7px;height:152px;background:#1b1a19;border-radius:0 0 4px 4px;"></div>
<div style="left:1684.4px;top:206px;width:152.7px;height:34.2px;background:#3a3a38;border-radius:0 0 4px 4px;"></div>
<div style="left:1840.3px;top:88.2px;width:152.7px;height:152px;background:#1b1a19;border-radius:0 0 4px 4px;"></div>
<div style="left:1840.3px;top:206px;width:152.7px;height:34.2px;background:#3a3a38;border-radius:0 0 4px 4px;"></div>
<div style="left:1996.2px;top:88.2px;width:152.7px;height:152px;background:#1b1a19;border-radius:0 0 4px 4px;"></div>
<div style="left:1996.2px;top:206px;width:152.7px;height:34.2px;background:#3a3a38;border-radius:0 0 4px 4px;"></div>
<div style="left:2152px;top:88.2px;width:152.7px;height:152px;background:#1b1a19;border-radius:0 0 4px 4px;"></div>
<div style="left:2152px;top:206px;width:152.7px;height:34.2px;background:#3a3a38;border-radius:0 0 4px 4px;"></div>
<div style="left:2307.9px;top:88.2px;width:152.7px;height:152px;background:#0f0f0f;border-radius:0 0 4px 4px;"></div>
<div style="left:2463.8px;top:88.2px;width:152.7px;height:152px;background:#0f0f0f;border-radius:0 0 4px 4px;"></div>
<div style="left:2619.6px;top:88.2px;width:152.7px;height:152px;background:#0f0f0f;border-radius:0 0 4px 4px;"></div>
<div style="left:2775.5px;top:88.2px;width:152.7px;height:152px;background:#0f0f0f;border-radius:0 0 4px 4px;"></div>
<div style="left:2931.4px;top:88.2px;width:56.6px;height:152px;background:#0f0f0f;border-radius:0 0 4px 4px;"></div>
<div style="left:0px;top:245.8px;width:77.8px;height:115.4px;background:#3a3a38;border-radius:0 4px 4px 0;"></div>
<svg style="left:28.4px;top:295.5px;" width="19.2" height="19.2" viewBox="0 0 19.2 19.2"><path d="M2 2L17.2 17.2M17.2 2L2 17.2" stroke="#f4f4f4" stroke-width="2.7" fill="none"/></svg>
<div style="left:79.7px;top:245.8px;width:79px;height:75.4px;background:#3a3a38;border-radius:4px;"></div>
<div class="t" style="left:79.7px;top:246.5px;width:79px;height:75.4px;line-height:75.4px;color:#fff;font-size:22px;text-align:center;">B</div>
<div style="left:161px;top:245.8px;width:84.3px;height:75.4px;background:#3a3a38;border-radius:4px;"></div>
<div class="t" style="left:161px;top:246.5px;width:84.3px;height:75.4px;line-height:75.4px;color:#fff;font-size:22px;text-align:center;">S</div>
<div style="left:79.7px;top:323.8px;width:165.6px;height:37.4px;background:#3a3a38;border-radius:4px;"></div>
<div class="t" style="left:79.7px;top:324.5px;width:165.6px;height:37.4px;line-height:37.4px;color:#fff;font-size:21px;padding-left:10px;box-sizing:border-box;">Add</div>
<svg style="left:223.8px;top:339.1px;" width="11.5" height="8.5" viewBox="0 0 11.5 8.5"><path d="M0 0H11.5L5.8 8.5Z" fill="#f4f4f4"/></svg>
<div style="left:247.5px;top:245.8px;width:37.8px;height:115.4px;background:#262626;border-radius:4px;"></div>
<div style="left:287.2px;top:245.8px;width:35.8px;height:115.4px;background:#262626;border-radius:4px;"></div>
<div style="left:325px;top:245.8px;width:36.5px;height:115.4px;background:#262626;border-radius:4px;"></div>
<div style="left:247.5px;top:245.8px;width:37.8px;height:30.5px;background:#3a3a38;border-radius:4px;"></div>
<div class="t" style="left:247.5px;top:246.5px;width:37.8px;height:30.5px;line-height:30.5px;color:#fff;font-size:20px;text-align:center;">M</div>
<div style="left:287.2px;top:245.8px;width:35.8px;height:30.5px;background:#4f7455;border-radius:4px;"></div>
<div class="t" style="left:287.2px;top:246.5px;width:35.8px;height:30.5px;line-height:30.5px;color:#fff;font-size:20px;text-align:center;">A</div>
<div style="left:325px;top:245.8px;width:36.5px;height:31px;background:#22606f;border-radius:4px;"></div>
<div class="t" style="left:325px;top:246.5px;width:36.5px;height:31px;line-height:31px;color:#fff;font-size:20px;text-align:center;">V</div>
<div style="left:363.8px;top:245.8px;width:155.2px;height:115.4px;background:#1c1b1a;"></div>
<div style="left:383.6px;top:245.8px;width:115px;height:115.4px;background:#000;"></div>
<svg style="left:383.6px;top:246px;opacity:.42;" width="115" height="115" viewBox="-101 -101 202 202"><use href="#dome" stroke-width="1.7"/></svg>
<div style="left:521px;top:245.8px;width:155.6px;height:30.5px;background:#1c1c1c;border-radius:4px;"></div>
<div style="left:521px;top:245.8px;width:31px;height:30.5px;background:#2a2a2a;border-radius:4px 0 0 4px;"></div>
<div style="left:552px;top:245.8px;width:31.1px;height:30.5px;background:#333;border-radius:4px;"></div>
<div class="t" style="left:552px;top:246.5px;width:31.1px;height:30.5px;line-height:30.5px;color:#565656;font-size:20px;text-align:center;">S</div>
<div style="left:521px;top:278.7px;width:77.3px;height:30.7px;background:#3a3a38;border-radius:4px;"></div>
<div style="left:599.2px;top:278.7px;width:77.4px;height:30.7px;background:#3a3a38;border-radius:4px;"></div>
<svg style="left:542px;top:284.3px;" width="20" height="19" viewBox="0 0 20 19"><ellipse cx="10" cy="9.8" rx="6.4" ry="5.6" fill="none" stroke="#2b2b2a" stroke-width="2.5"/><path d="M5.6 8.4C7 5.6 9.6 7 10 9.8S13 14 14.4 11.2" fill="none" stroke="#2b2b2a" stroke-width="2.3"/><path d="M7.8 1.6l5 2.4-4.4 3zM12.2 18l-5-2.400 4.400-3z" fill="#2b2b2a"/></svg>
<svg style="left:576.3px;top:290.8px;" width="10" height="5.6" viewBox="0 0 10 5.6"><path d="M0 0H10L5 5.6Z" fill="#2b2b2a"/></svg>
<svg style="left:621px;top:286.8px;" width="18" height="14" viewBox="0 0 18 14"><path d="M1 0.5V13.5L8 7Z" fill="#2b2b2a"/><path d="M6 7H17" stroke="#2b2b2a" stroke-width="2"/></svg>
<svg style="left:654.3px;top:290.8px;" width="10" height="5.6" viewBox="0 0 10 5.6"><path d="M0 0H10L5 5.6Z" fill="#2b2b2a"/></svg>
<div style="left:521px;top:311.8px;width:155.6px;height:49.4px;background:#3a3a38;border-radius:4px;"></div>
<svg style="left:541.7px;top:329.5px;" width="10.2" height="13.4" viewBox="0 0 10.2 13.4"><path d="M10.2 0V13.4L0 6.7Z" fill="#272726"/></svg>
<svg style="left:592px;top:329.5px;" width="14" height="13.4" viewBox="0 0 14 13.4"><path d="M0 0h4.9v13.4h-4.9zM9.1 0h4.9v13.4h-4.9z" fill="#272726"/></svg>
<svg style="left:645.7px;top:329.5px;" width="10.2" height="13.4" viewBox="0 0 10.2 13.4"><path d="M0 0V13.4L10.2 6.7Z" fill="#272726"/></svg>
<div style="left:678.6px;top:245.8px;width:55.3px;height:49.5px;background:#1a1918;border-radius:4px;"></div>
<div style="left:678.6px;top:294.8px;width:55.3px;height:30.5px;background:#3a3a38;border-radius:4px;"></div>
<div class="t" style="left:678.6px;top:294.3px;width:55.3px;height:30.5px;line-height:30.5px;color:#fff;font-size:20px;text-align:center;">T</div>
<div style="left:678.6px;top:327.4px;width:55.3px;height:33.8px;background:#3a3a38;border-radius:4px;"></div>
<div class="t" style="left:678.6px;top:329.4px;width:55.3px;height:33.8px;line-height:33.8px;color:#fff;font-size:19.5px;text-align:center;letter-spacing:-1.01px;padding-left:-1.01px;">Alph</div>
<div style="left:738.8px;top:245.8px;width:3.9px;height:152px;background:#527d5f;"></div>
<div style="left:0px;top:363.6px;width:245.3px;height:34.2px;background:#3a3a38;border-radius:0 4px 4px 0;"></div>
<div class="t" style="left:0px;top:364.3px;width:245.3px;height:34.2px;line-height:34.2px;color:#fff;font-size:20.5px;padding-left:6.5px;box-sizing:border-box;letter-spacing:-0.40px;">Layer 1</div>
<div style="left:247.5px;top:363.6px;width:114px;height:34.2px;background:#3a3a38;border-radius:4px;"></div>
<div class="t" style="left:262px;top:364.3px;width:32px;height:34.2px;line-height:34.2px;color:#fff;font-size:20px;text-align:center;">A</div>
<div class="t" style="left:314px;top:364.3px;width:32px;height:34.2px;line-height:34.2px;color:#fff;font-size:20px;text-align:center;">B</div>
<div style="left:363.8px;top:363.6px;width:155.2px;height:34.2px;background:#3a3a38;border-radius:4px;"></div>
<div class="t" style="left:371.5px;top:365.3px;width:228.5px;height:34.2px;line-height:34.2px;color:#fff;font-size:21px;transform:scaleX(0.722);transform-origin:left center;">The Dome Bluepri...</div>
<div style="left:522.7px;top:363.6px;width:152.3px;height:34.2px;background:#2d2d2d;border-radius:4px;"></div>
<div style="left:597.5px;top:363.6px;width:6.6px;height:34.2px;background:#3a3a3a;"></div>
<div style="left:678.6px;top:363.6px;width:55.3px;height:34.2px;background:#3a3a38;border-radius:4px;"></div>
<svg style="left:688.5px;top:373.7px;" width="11" height="15" viewBox="0 0 11 15"><path d="M0 0h3.2v15h-3.2zM11 0V15L2.4 7.5Z" fill="#f4f4f4"/></svg>
<svg style="left:713px;top:373.7px;" width="11" height="15" viewBox="0 0 11 15"><path d="M7.8 0h3.2v15h-3.2zM0 0V15L8.6 7.5Z" fill="#f4f4f4"/></svg>
<div style="left:749.2px;top:245.8px;width:152.7px;height:117.6px;background:#5fdaee;"></div>
<div style="left:753px;top:249.8px;width:145.1px;height:109.8px;background:#1c1b1a;"></div>
<div style="left:768.7px;top:249.8px;width:113.7px;height:109.8px;background:#000;"></div>
<svg style="left:768.7px;top:249.8px;opacity:.42;" width="113.7" height="109.8" viewBox="-103.5 -100.5 207 201"><use href="#dome" stroke-width="1.7"/></svg>
<div style="left:749.2px;top:364.4px;width:152.7px;height:33.4px;background:#3a3a38;border-radius:0 0 4px 4px;"></div>
<div class="t" style="left:757.8px;top:365.3px;width:221.4px;height:34.2px;line-height:34.2px;color:#fff;font-size:21px;transform:scaleX(0.713);transform-origin:left center;">The Dome Bluepri...</div>
<div style="left:905.1px;top:245.8px;width:152.7px;height:152px;background:#1b1a19;border-radius:0 0 4px 4px;"></div>
<div style="left:905.1px;top:363.6px;width:152.7px;height:34.2px;background:#3a3a38;border-radius:0 0 4px 4px;"></div>
<div style="left:1060.9px;top:245.8px;width:152.7px;height:152px;background:#1b1a19;border-radius:0 0 4px 4px;"></div>
<div style="left:1060.9px;top:363.6px;width:152.7px;height:34.2px;background:#3a3a38;border-radius:0 0 4px 4px;"></div>
<div style="left:1216.8px;top:245.8px;width:152.7px;height:152px;background:#1b1a19;border-radius:0 0 4px 4px;"></div>
<div style="left:1216.8px;top:363.6px;width:152.7px;height:34.2px;background:#3a3a38;border-radius:0 0 4px 4px;"></div>
<div style="left:1372.7px;top:245.8px;width:152.7px;height:152px;background:#1b1a19;border-radius:0 0 4px 4px;"></div>
<div style="left:1372.7px;top:363.6px;width:152.7px;height:34.2px;background:#3a3a38;border-radius:0 0 4px 4px;"></div>
<div style="left:1528.6px;top:245.8px;width:152.7px;height:152px;background:#1b1a19;border-radius:0 0 4px 4px;"></div>
<div style="left:1528.6px;top:363.6px;width:152.7px;height:34.2px;background:#3a3a38;border-radius:0 0 4px 4px;"></div>
<div style="left:1684.4px;top:245.8px;width:152.7px;height:152px;background:#1b1a19;border-radius:0 0 4px 4px;"></div>
<div style="left:1684.4px;top:363.6px;width:152.7px;height:34.2px;background:#3a3a38;border-radius:0 0 4px 4px;"></div>
<div style="left:1840.3px;top:245.8px;width:152.7px;height:152px;background:#1b1a19;border-radius:0 0 4px 4px;"></div>
<div style="left:1840.3px;top:363.6px;width:152.7px;height:34.2px;background:#3a3a38;border-radius:0 0 4px 4px;"></div>
<div style="left:1996.2px;top:245.8px;width:152.7px;height:152px;background:#1b1a19;border-radius:0 0 4px 4px;"></div>
<div style="left:1996.2px;top:363.6px;width:152.7px;height:34.2px;background:#3a3a38;border-radius:0 0 4px 4px;"></div>
<div style="left:2152px;top:245.8px;width:152.7px;height:152px;background:#1b1a19;border-radius:0 0 4px 4px;"></div>
<div style="left:2152px;top:363.6px;width:152.7px;height:34.2px;background:#3a3a38;border-radius:0 0 4px 4px;"></div>
<div style="left:2307.9px;top:245.8px;width:152.7px;height:152px;background:#0f0f0f;border-radius:0 0 4px 4px;"></div>
<div style="left:2463.8px;top:245.8px;width:152.7px;height:152px;background:#0f0f0f;border-radius:0 0 4px 4px;"></div>
<div style="left:2619.6px;top:245.8px;width:152.7px;height:152px;background:#0f0f0f;border-radius:0 0 4px 4px;"></div>
<div style="left:2775.5px;top:245.8px;width:152.7px;height:152px;background:#0f0f0f;border-radius:0 0 4px 4px;"></div>
<div style="left:2931.4px;top:245.8px;width:56.6px;height:152px;background:#0f0f0f;border-radius:0 0 4px 4px;"></div>
<div style="left:0px;top:406.6px;width:676.6px;height:34.4px;background:#070707;border-radius:0 4px 4px 0;"></div>
<div style="left:0px;top:406.6px;width:31px;height:34.4px;background:#3a3a38;border-radius:0 4px 4px 0;"></div>
<div class="t" style="left:0px;top:407.3px;width:31px;height:34.4px;line-height:34.4px;color:#fff;font-size:20px;text-align:center;">A</div>
<div style="left:327px;top:406.6px;width:20.8px;height:34.4px;background:#1f6175;"></div>
<div style="left:644px;top:406.6px;width:32.6px;height:34.4px;background:#3a3a38;border-radius:4px;"></div>
<div class="t" style="left:644px;top:407.3px;width:32.6px;height:34.4px;line-height:34.4px;color:#fff;font-size:20px;text-align:center;">B</div>
<div style="left:678.6px;top:406.6px;width:55.3px;height:34.4px;background:#3a3a38;border-radius:4px;"></div>
<svg style="left:688.5px;top:416.8px;" width="11" height="15" viewBox="0 0 11 15"><path d="M0 0h3.2v15h-3.2zM11 0V15L2.4 7.5Z" fill="#f4f4f4"/></svg>
<svg style="left:713px;top:416.8px;" width="11" height="15" viewBox="0 0 11 15"><path d="M7.8 0h3.2v15h-3.2zM0 0V15L8.6 7.5Z" fill="#f4f4f4"/></svg>
<div style="left:749.2px;top:406.6px;width:133.7px;height:34.4px;background:#5fdaee;border-radius:0 0 4px 4px;"></div>
<div class="t" style="left:749.2px;top:407.3px;width:133.7px;height:34.4px;line-height:34.4px;color:#111;font-size:20px;text-align:center;letter-spacing:0.07px;padding-left:0.07px;">Publish</div>
<div style="left:884.8px;top:406.6px;width:122.2px;height:34.4px;background:#3a3a38;border-radius:0 0 4px 4px;"></div>
<div class="t" style="left:884.8px;top:407.3px;width:122.2px;height:34.4px;line-height:34.4px;color:#fff;font-size:20px;text-align:center;letter-spacing:1.13px;padding-left:1.13px;">empty</div>
<div style="left:1009.2px;top:406.6px;width:122.5px;height:34.4px;background:#3a3a38;border-radius:0 0 4px 4px;"></div>
<div class="t" style="left:1009.2px;top:407.3px;width:122.5px;height:34.4px;line-height:34.4px;color:#fff;font-size:20px;text-align:center;letter-spacing:1.13px;padding-left:1.13px;">empty</div>
<div style="left:0px;top:446.3px;width:2988px;height:62.7px;background:#2b2b2b;"></div>
<div style="left:62px;top:446.3px;width:1.8px;height:62.7px;background:#000;"></div>
<div style="left:233.7px;top:446.3px;width:1.8px;height:62.7px;background:#000;"></div>
<div style="left:297.6px;top:446.3px;width:1.8px;height:62.7px;background:#000;"></div>
<div style="left:361.7px;top:446.3px;width:1.8px;height:62.7px;background:#000;"></div>
<div style="left:425.8px;top:446.3px;width:1.8px;height:62.7px;background:#000;"></div>
<div style="left:489.7px;top:446.3px;width:1.8px;height:62.7px;background:#000;"></div>
<div style="left:554.1px;top:446.3px;width:1.8px;height:62.7px;background:#000;"></div>
<div style="left:618.1px;top:446.3px;width:1.8px;height:62.7px;background:#000;"></div>
<div style="left:709.1px;top:446.3px;width:1.8px;height:62.7px;background:#000;"></div>
<div style="left:841.1px;top:446.3px;width:1.8px;height:62.7px;background:#000;"></div>
<div style="left:967.4px;top:446.3px;width:1.8px;height:62.7px;background:#000;"></div>
<div style="left:1031.6px;top:446.3px;width:1.8px;height:62.7px;background:#000;"></div>
<div style="left:1094.1px;top:446.3px;width:1.8px;height:62.7px;background:#000;"></div>
<div style="left:1156.1px;top:446.3px;width:1.8px;height:62.7px;background:#000;"></div>
<div style="left:13.8px;top:462px;width:32.6px;height:31px;background:#22606f;"></div>
<div style="left:13.8px;top:462px;width:15.4px;height:16px;background:#5fdaee;"></div>
<div class="t" style="left:83.6px;top:446.8px;width:156.4px;height:62.7px;line-height:62.7px;color:#fff;font-size:20.5px;letter-spacing:-1.71px;">BPM</div>
<div class="t" style="left:140.6px;top:446.8px;width:99.4px;height:62.7px;line-height:62.7px;color:#fff;font-size:20.5px;letter-spacing:-0.35px;">120</div>
<svg style="left:258.6px;top:469.6px;" width="16" height="16" viewBox="0 0 16 16"><path d="M1.5 8H14.5" stroke="#f4f4f4" stroke-width="3"/></svg>
<svg style="left:321.6px;top:468.6px;" width="18" height="18" viewBox="0 0 18 18"><path d="M1 9H17M9 1V17" stroke="#f4f4f4" stroke-width="3.2"/></svg>
<svg style="left:384.6px;top:465.6px;" width="20" height="24" viewBox="0 0 20 24"><path d="M15 1.5V22.5" stroke="#f4f4f4" stroke-width="2.6"/><path d="M13 11H6" stroke="#f4f4f4" stroke-width="2.4"/><path d="M2.5 11L8 6.5V15.5Z" fill="#f4f4f4"/></svg>
<svg style="left:448.6px;top:465.6px;" width="20" height="24" viewBox="0 0 20 24"><path d="M5 1.5V22.5" stroke="#f4f4f4" stroke-width="2.6"/><path d="M7 11H14" stroke="#f4f4f4" stroke-width="2.4"/><path d="M17.5 11L12 6.5V15.5Z" fill="#f4f4f4"/></svg>
<div class="t" style="left:490.4px;top:446.8px;width:62.4px;height:62.7px;line-height:62.7px;color:#fff;font-size:20.5px;text-align:center;">/2</div>
<div class="t" style="left:554.8px;top:446.8px;width:62px;height:62.7px;line-height:62.7px;color:#fff;font-size:20.5px;text-align:center;">×2</div>
<div class="t" style="left:617.6px;top:446.8px;width:89px;height:62.7px;line-height:62.7px;color:#fff;font-size:20.5px;text-align:center;letter-spacing:-0.92px;padding-left:-0.92px;">TAP</div>
<div class="t" style="left:708.2px;top:446.8px;width:130.3px;height:62.7px;line-height:62.7px;color:#fff;font-size:20.5px;text-align:center;letter-spacing:-2.39px;padding-left:-2.39px;">RESYNC</div>
<div class="t" style="left:840.6px;top:446.8px;width:124.7px;height:62.7px;line-height:62.7px;color:#fff;font-size:20.5px;text-align:center;letter-spacing:-1.99px;padding-left:-1.99px;">PAUSE</div>
<svg style="left:986px;top:463px;" width="30" height="30" viewBox="0 0 30 30"><path d="M10.5 3.5h6.2l5.3 22.5H4.5Z" fill="none" stroke="#f4f4f4" stroke-width="2.4" stroke-linejoin="round"/><path d="M6.8 18h13.4l2 8.2H4.6Z" fill="#f4f4f4"/><path d="M5 26h17.6v1.2H5zM7 27h3v1.6H7zM17.6 27h3v1.6h-3z" fill="#f4f4f4"/><path d="M13 19L23 8.6" stroke="#f4f4f4" stroke-width="2.2"/><circle cx="23.6" cy="8" r="2.6" fill="#f4f4f4"/></svg>
<svg style="left:1049px;top:463px;" width="32" height="30" viewBox="0 0 32 30"><path d="M11.9 10.6A7.7 7.7 0 1 1 17.5 22.7" fill="none" stroke="#f4f4f4" stroke-width="5" stroke-linecap="round"/><path d="M3.3 3.2V14.2H14.3Z" fill="#f4f4f4" stroke="#f4f4f4" stroke-width="1" stroke-linejoin="round"/></svg>
<svg style="left:1111px;top:463px;" width="32" height="30" viewBox="0 0 32 30"><g transform="translate(32 0) scale(-1 1)"><path d="M11.9 10.6A7.7 7.7 0 1 1 17.5 22.7" fill="none" stroke="#1a1a1a" stroke-width="5" stroke-linecap="round"/><path d="M3.3 3.2V14.2H14.3Z" fill="#1a1a1a" stroke="#1a1a1a" stroke-width="1" stroke-linejoin="round"/></g></svg>
<div style="left:0px;top:514.2px;width:740.8px;height:39.7px;background:#2d2d2d;border-radius:0 5px 0 0;"></div>
<div class="t" style="left:0px;top:512.4px;width:734.8px;height:39.7px;line-height:39.7px;color:#e6e6e6;font-size:20.5px;text-align:center;letter-spacing:1.19px;padding-left:1.19px;">Composition Monitor</div>
<div style="left:0px;top:555.5px;width:740.8px;height:567px;background:#151513;"></div>
<div style="left:86.6px;top:555.5px;width:565.6px;height:565.6px;background:#000;"></div>
<svg style="left:86.6px;top:555.5px;" width="565.6" height="565.6" viewBox="-102.61 -103.80 204.93 204.93"><use href="#dome" stroke-width=".47"/></svg>
<svg style="left:133.2px;top:705.4px;" width="472.4" height="265.8" viewBox="0 0 472.4 265.8"><use href="#tp" width="472.4" height="265.8"/></svg>
<svg style="left:86.6px;top:555.5px;opacity:.85;" width="565.6" height="565.6" viewBox="-102.61 -103.80 204.93 204.93"><use href="#dome" stroke-width=".47"/></svg>
<div style="left:0px;top:1123.7px;width:740.8px;height:41px;background:#2a2a2a;"></div>
<div class="t" style="left:0px;top:1123.7px;width:740.8px;height:41px;line-height:41px;color:#cfcfcf;font-size:20px;padding-left:13.5px;box-sizing:border-box;letter-spacing:0.34px;">Composition - 1920x1920</div>
<svg style="left:707.7px;top:1133px;" width="24" height="24" viewBox="-12 -12 24 24"><path d="M10.09 -1.52L10.09 1.52L7.38 1.83L6.51 3.92L8.20 6.06L6.06 8.20L3.92 6.51L1.83 7.38L1.52 10.09L-1.52 10.09L-1.83 7.38L-3.92 6.51L-6.06 8.20L-8.20 6.06L-6.51 3.92L-7.38 1.83L-10.09 1.52L-10.09 -1.52L-7.38 -1.83L-6.51 -3.92L-8.20 -6.06L-6.06 -8.20L-3.92 -6.51L-1.83 -7.38L-1.52 -10.09L1.52 -10.09L1.83 -7.38L3.92 -6.51L6.06 -8.20L8.20 -6.06L6.51 -3.92L7.38 -1.83ZM4.30 0A4.30 4.30 0 1 0 -4.30 0A4.30 4.30 0 1 0 4.30 0Z" fill="#c6c6c6" fill-rule="evenodd" stroke="#c6c6c6" stroke-width="1" stroke-linejoin="round" transform="scale(0.93)"/></svg>
<div style="left:0px;top:1170.3px;width:740.8px;height:39.7px;background:#2d2d2d;border-radius:5px 5px 0 0;"></div>
<div class="t" style="left:0px;top:1168.5px;width:733.8px;height:39.7px;line-height:39.7px;color:#e6e6e6;font-size:20.5px;text-align:center;letter-spacing:0.97px;padding-left:0.97px;">Preview Monitor</div>
<div style="left:0px;top:1212px;width:740.8px;height:567px;background:#161614;"></div>
<div style="left:121px;top:1246.3px;width:497px;height:497px;background:#000;background-image:conic-gradient(#383838 25%,#000 0 50%,#383838 0 75%,#000 0);background-size:27.6111px 27.6111px;"></div>
<svg style="left:162.3px;top:1379px;" width="414.6" height="232.2" viewBox="0 0 414.6 232.2"><use href="#tp" width="414.6" height="232.2"/></svg>
<svg style="left:122.3px;top:1339px;" width="494.6" height="312.2" viewBox="0 0 494.6 312.2"><circle cx="40" cy="40" r="29.5" fill="rgba(80,190,220,.22)" stroke="#58c4dc" stroke-width="2"/><circle cx="454.6" cy="40" r="29.5" fill="rgba(80,190,220,.22)" stroke="#58c4dc" stroke-width="2"/><circle cx="40" cy="272.2" r="29.5" fill="rgba(80,190,220,.22)" stroke="#58c4dc" stroke-width="2"/><circle cx="454.6" cy="272.2" r="29.5" fill="rgba(80,190,220,.22)" stroke="#58c4dc" stroke-width="2"/><rect x="30.5" y="30.5" width="19" height="19" fill="rgba(90,200,230,.18)" stroke="#58c4dc" stroke-width="2.6"/><rect x="445.1" y="30.5" width="19" height="19" fill="rgba(90,200,230,.18)" stroke="#58c4dc" stroke-width="2.6"/><rect x="30.5" y="262.7" width="19" height="19" fill="rgba(90,200,230,.18)" stroke="#58c4dc" stroke-width="2.6"/><rect x="445.1" y="262.7" width="19" height="19" fill="rgba(90,200,230,.18)" stroke="#58c4dc" stroke-width="2.6"/><rect x="237.8" y="30.5" width="19" height="19" fill="rgba(90,200,230,.18)" stroke="#58c4dc" stroke-width="2.6"/><rect x="237.8" y="262.7" width="19" height="19" fill="rgba(90,200,230,.18)" stroke="#58c4dc" stroke-width="2.6"/><rect x="30.5" y="146.6" width="19" height="19" fill="rgba(90,200,230,.18)" stroke="#58c4dc" stroke-width="2.6"/><rect x="445.1" y="146.6" width="19" height="19" fill="rgba(90,200,230,.18)" stroke="#58c4dc" stroke-width="2.6"/><rect x="40" y="40" width="414.6" height="232.2" fill="none" stroke="#58c4dc" stroke-width="1"/></svg>
<div style="left:0px;top:1780.2px;width:522.8px;height:40.8px;background:#2a2a2a;"></div>
<div class="t" style="left:0px;top:1780.2px;width:522.8px;height:40.8px;line-height:40.8px;color:#cfcfcf;font-size:20px;padding-left:13.5px;box-sizing:border-box;letter-spacing:-0.23px;">Preview - Clip - Test Pattern Modern A1 - 1920x1080</div>
<div style="left:524.7px;top:1780.2px;width:129.2px;height:40.8px;background:#2a2a2a;"></div>
<div class="t" style="left:524.7px;top:1780.2px;width:129.2px;height:40.8px;line-height:40.8px;color:#fff;font-size:20.5px;padding-left:63.5px;box-sizing:border-box;letter-spacing:0.11px;">Fit</div>
<svg style="left:630px;top:1796.9px;" width="14" height="8" viewBox="0 0 14 8"><path d="M0 0H14L7 8Z" fill="#f4f4f4"/></svg>
<div style="left:656px;top:1780.2px;width:41px;height:40.8px;background:#2a2a2a;"></div>
<svg style="left:665.5px;top:1788.6px;" width="22" height="24" viewBox="0 0 22 24"><path d="M9.8 14.6L6.400 4.200M12.100 14.200L11.400 2.300M14.500 14.600L16.500 3.600M16.300 16L19.800 6.700M9.300 17.400L1.900 12.300" fill="none" stroke="#c8c8c8" stroke-width="3.300" stroke-linecap="round"/><path d="M7.500 12.800H17.700L16.300 22.600H8.900Z" fill="#c8c8c8" stroke="#c8c8c8" stroke-width="1.200" stroke-linejoin="round"/></svg>
<div style="left:699.2px;top:1780.2px;width:41.6px;height:40.8px;background:#2a2a2a;"></div>
<svg style="left:707.7px;top:1789.2px;" width="24" height="24" viewBox="-12 -12 24 24"><path d="M10.09 -1.52L10.09 1.52L7.38 1.83L6.51 3.92L8.20 6.06L6.06 8.20L3.92 6.51L1.83 7.38L1.52 10.09L-1.52 10.09L-1.83 7.38L-3.92 6.51L-6.06 8.20L-8.20 6.06L-6.51 3.92L-7.38 1.83L-10.09 1.52L-10.09 -1.52L-7.38 -1.83L-6.51 -3.92L-8.20 -6.06L-6.06 -8.20L-3.92 -6.51L-1.83 -7.38L-1.52 -10.09L1.52 -10.09L1.83 -7.38L3.92 -6.51L6.06 -8.20L8.20 -6.06L6.51 -3.92L7.38 -1.83ZM4.30 0A4.30 4.30 0 1 0 -4.30 0A4.30 4.30 0 1 0 4.30 0Z" fill="#c6c6c6" fill-rule="evenodd" stroke="#c6c6c6" stroke-width="1" stroke-linejoin="round" transform="scale(0.93)"/></svg>
<div style="left:745.9px;top:514.2px;width:368.8px;height:39.7px;background:#212121;border-radius:5px 5px 0 0;"></div>
<div class="t" style="left:745.9px;top:512.4px;width:368.8px;height:39.7px;line-height:39.7px;color:#9c9c9c;font-size:20.5px;text-align:center;letter-spacing:1.11px;padding-left:1.11px;">Composition</div>
<div style="left:1116.3px;top:514.2px;width:372.4px;height:39.7px;background:#2d2d2d;border-radius:5px 5px 0 0;"></div>
<div class="t" style="left:1116.3px;top:512.4px;width:372.4px;height:39.7px;line-height:39.7px;color:#e6e6e6;font-size:20.5px;text-align:center;letter-spacing:0.43px;padding-left:0.43px;">Layer</div>
<div style="left:745.9px;top:555.5px;width:742.8px;height:1268.1px;background:#0a0a0a;"></div>
<div style="left:745.9px;top:555.5px;width:742.8px;height:58.5px;background:#2d2d2d;"></div>
<div style="left:758px;top:566px;width:216px;height:37.5px;background:#141414;border-radius:5px;"></div>
<div class="t" style="left:758px;top:564.8px;width:216px;height:37.5px;line-height:37.5px;color:#fff;font-size:20.5px;padding-left:10.5px;box-sizing:border-box;letter-spacing:-0.40px;">Layer 2</div>
<svg style="left:1403.6px;top:575.2px;" width="24" height="24" viewBox="0 0 24 24"><circle cx="10" cy="10" r="6.5" fill="none" stroke="#e2e2e2" stroke-width="3.9"/><path d="M15 15L20.8 20.3" stroke="#e2e2e2" stroke-width="4" stroke-linecap="round"/></svg>
<svg style="left:1443.6px;top:573.8px;" width="24" height="24" viewBox="-12 -12 24 24"><path d="M10.09 -1.52L10.09 1.52L7.38 1.83L6.51 3.92L8.20 6.06L6.06 8.20L3.92 6.51L1.83 7.38L1.52 10.09L-1.52 10.09L-1.83 7.38L-3.92 6.51L-6.06 8.20L-8.20 6.06L-6.51 3.92L-7.38 1.83L-10.09 1.52L-10.09 -1.52L-7.38 -1.83L-6.51 -3.92L-8.20 -6.06L-6.06 -8.20L-3.92 -6.51L-1.83 -7.38L-1.52 -10.09L1.52 -10.09L1.83 -7.38L3.92 -6.51L6.06 -8.20L8.20 -6.06L6.51 -3.92L7.38 -1.83ZM4.30 0A4.30 4.30 0 1 0 -4.30 0A4.30 4.30 0 1 0 4.30 0Z" fill="#e2e2e2" fill-rule="evenodd" stroke="#e2e2e2" stroke-width="1" stroke-linejoin="round" transform="scale(1.0)"/></svg>
<div style="left:745.9px;top:616.2px;width:742.8px;height:39.5px;background:#2d2d2d;"></div>
<svg style="left:759.9px;top:628.6px;" width="10" height="13.4" viewBox="0 0 10 13.4"><path d="M0 0V13.4L10 6.7Z" fill="#8a8a8a"/></svg>
<div class="t" style="left:782.3px;top:614.5px;width:706.4px;height:39.5px;line-height:39.5px;color:#fff;font-size:20.5px;letter-spacing:0.24px;">Dashboard</div>
<div style="left:745.9px;top:657.8px;width:742.8px;height:39.5px;background:#2d2d2d;"></div>
<svg style="left:759.9px;top:670.2px;" width="10" height="13.4" viewBox="0 0 10 13.4"><path d="M0 0V13.4L10 6.7Z" fill="#8a8a8a"/></svg>
<div class="t" style="left:782.3px;top:656.1px;width:706.4px;height:39.5px;line-height:39.5px;color:#fff;font-size:20.5px;letter-spacing:0.65px;">Autopilot</div>
<div style="left:745.9px;top:699.4px;width:742.8px;height:39.5px;background:#2d2d2d;"></div>
<svg style="left:758.1px;top:715.1px;" width="13.6" height="10.2" viewBox="0 0 13.6 10.2"><path d="M0 0H13.6L6.8 10.2Z" fill="#8a8a8a"/></svg>
<div class="t" style="left:782.3px;top:697.7px;width:706.4px;height:39.5px;line-height:39.5px;color:#fff;font-size:20.5px;letter-spacing:-0.25px;">Layer</div>
<div style="left:745.9px;top:741px;width:148.8px;height:39.5px;background:#161514;"></div>
<div style="left:896.4px;top:741px;width:592.3px;height:39.5px;background:#161514;"></div>
<div class="t" style="left:745.9px;top:739.3px;width:138.2px;height:39.5px;line-height:39.5px;color:#fff;font-size:20.5px;text-align:right;letter-spacing:0.37px;margin-left:0.37px;">Master</div>
<div class="t" style="left:905.9px;top:739.3px;width:140px;height:39.5px;line-height:39.5px;color:#fff;font-size:20.5px;letter-spacing:-1.06px;">100 %</div>
<svg style="left:991.9px;top:753.4px;" width="12" height="12" viewBox="0 0 12 12"><path d="M1.2 6H10.8" stroke="#f4f4f4" stroke-width="2.9"/></svg>
<svg style="left:1029.5px;top:752.4px;" width="14" height="14" viewBox="0 0 14 14"><path d="M1.5 7H12.5M7 1.5V12.5" stroke="#f4f4f4" stroke-width="2.9"/></svg>
<div style="left:1071.3px;top:746.2px;width:405.5px;height:29.5px;background:#2d2d2d;"></div>
<div style="left:1470px;top:746.2px;width:6.8px;height:29.5px;background:#22708a;"></div>
<div style="left:745.9px;top:782.6px;width:742.8px;height:39.5px;background:#2d2d2d;"></div>
<svg style="left:759.9px;top:795px;" width="10" height="13.4" viewBox="0 0 10 13.4"><path d="M0 0V13.4L10 6.7Z" fill="#8a8a8a"/></svg>
<div class="t" style="left:782.3px;top:780.9px;width:706.4px;height:39.5px;line-height:39.5px;color:#fff;font-size:20.5px;letter-spacing:0.29px;">Audio</div>
<div style="left:745.9px;top:824.2px;width:742.8px;height:39.5px;background:#2d2d2d;"></div>
<svg style="left:758.1px;top:839.9px;" width="13.6" height="10.2" viewBox="0 0 13.6 10.2"><path d="M0 0H13.6L6.8 10.2Z" fill="#8a8a8a"/></svg>
<div class="t" style="left:782.3px;top:822.5px;width:706.4px;height:39.5px;line-height:39.5px;color:#fff;font-size:20.5px;letter-spacing:-0.02px;">Video</div>
<div style="left:745.9px;top:865.7px;width:148.8px;height:39.5px;background:#161514;"></div>
<div style="left:896.4px;top:865.7px;width:550.2px;height:39.5px;background:#161514;"></div>
<div class="t" style="left:745.9px;top:864px;width:141.6px;height:39.5px;line-height:39.5px;color:#fff;font-size:20.5px;text-align:right;letter-spacing:-0.29px;margin-left:-0.29px;">Blend Mode</div>
<div class="t" style="left:905.9px;top:864px;width:140px;height:39.5px;line-height:39.5px;color:#fff;font-size:20.5px;letter-spacing:-0.39px;">Add</div>
<svg style="left:1002.9px;top:882.2px;" width="12" height="6.6" viewBox="0 0 12 6.6"><path d="M0 0H12L6 6.6Z" fill="#f4f4f4"/></svg>
<div style="left:1448.4px;top:865.7px;width:40.3px;height:39.5px;background:#161514;"></div>
<div class="t" style="left:1448.4px;top:865.7px;width:34.3px;height:39.5px;line-height:39.5px;color:#fff;font-size:20.5px;text-align:center;">P</div>
<svg style="left:1471.7px;top:890.3px;" width="5" height="3.4" viewBox="0 0 5 3.4"><path d="M0 0H5L2.5 3.4Z" fill="#f4f4f4"/></svg>
<div style="left:745.9px;top:907.3px;width:148.8px;height:39.5px;background:#161514;"></div>
<div style="left:896.4px;top:907.3px;width:592.3px;height:39.5px;background:#161514;"></div>
<div class="t" style="left:745.9px;top:905.6px;width:138.2px;height:39.5px;line-height:39.5px;color:#fff;font-size:20.5px;text-align:right;letter-spacing:0.10px;margin-left:0.10px;">Opacity</div>
<div class="t" style="left:905.9px;top:905.6px;width:140px;height:39.5px;line-height:39.5px;color:#fff;font-size:20.5px;letter-spacing:-1.24px;">50 %</div>
<svg style="left:991.9px;top:919.8px;" width="12" height="12" viewBox="0 0 12 12"><path d="M1.2 6H10.8" stroke="#f4f4f4" stroke-width="2.9"/></svg>
<svg style="left:1029.5px;top:918.8px;" width="14" height="14" viewBox="0 0 14 14"><path d="M1.5 7H12.5M7 1.5V12.5" stroke="#f4f4f4" stroke-width="2.9"/></svg>
<div style="left:1071.3px;top:912.5px;width:405.5px;height:29.5px;background:#0a0a0a;background-image:conic-gradient(#151515 25%,#050505 0 50%,#151515 0 75%,#050505 0);background-size:13.2px 13.2px;"></div>
<div style="left:1071.3px;top:912.5px;width:199.3px;height:29.5px;background:#2d2d2d;"></div>
<div style="left:1270.6px;top:912.5px;width:6.8px;height:29.5px;background:#22708a;"></div>
<div style="left:745.9px;top:948.9px;width:148.8px;height:39.5px;background:#161514;"></div>
<div style="left:896.4px;top:948.9px;width:592.3px;height:39.5px;background:#161514;"></div>
<div class="t" style="left:745.9px;top:947.2px;width:138.2px;height:39.5px;line-height:39.5px;color:#fff;font-size:20.5px;text-align:right;letter-spacing:0.55px;margin-left:0.55px;">Width</div>
<div class="t" style="left:905.9px;top:947.2px;width:140px;height:39.5px;line-height:39.5px;color:#fff;font-size:20.5px;letter-spacing:-0.54px;">1920</div>
<svg style="left:991.9px;top:961.4px;" width="12" height="12" viewBox="0 0 12 12"><path d="M1.2 6H10.8" stroke="#f4f4f4" stroke-width="2.9"/></svg>
<svg style="left:1029.5px;top:960.4px;" width="14" height="14" viewBox="0 0 14 14"><path d="M1.5 7H12.5M7 1.5V12.5" stroke="#f4f4f4" stroke-width="2.9"/></svg>
<div style="left:745.9px;top:990.5px;width:148.8px;height:39.5px;background:#161514;"></div>
<div style="left:896.4px;top:990.5px;width:592.3px;height:39.5px;background:#161514;"></div>
<div class="t" style="left:745.9px;top:988.8px;width:138.2px;height:39.5px;line-height:39.5px;color:#fff;font-size:20.5px;text-align:right;letter-spacing:0.53px;margin-left:0.53px;">Height</div>
<div class="t" style="left:905.9px;top:988.8px;width:140px;height:39.5px;line-height:39.5px;color:#fff;font-size:20.5px;letter-spacing:-0.54px;">1920</div>
<svg style="left:991.9px;top:1003px;" width="12" height="12" viewBox="0 0 12 12"><path d="M1.2 6H10.8" stroke="#f4f4f4" stroke-width="2.9"/></svg>
<svg style="left:1029.5px;top:1002px;" width="14" height="14" viewBox="0 0 14 14"><path d="M1.5 7H12.5M7 1.5V12.5" stroke="#f4f4f4" stroke-width="2.9"/></svg>
<div style="left:745.9px;top:1032.1px;width:148.8px;height:39.5px;background:#161514;"></div>
<div style="left:896.4px;top:1032.1px;width:592.3px;height:39.5px;background:#161514;"></div>
<div class="t" style="left:745.9px;top:1030.4px;width:138.2px;height:39.5px;line-height:39.5px;color:#fff;font-size:20.5px;text-align:right;letter-spacing:-0.31px;margin-left:-0.31px;">Auto Size</div>
<div class="t" style="left:905.9px;top:1030.4px;width:140px;height:39.5px;line-height:39.5px;color:#fff;font-size:20.5px;letter-spacing:1.02px;">Off</div>
<svg style="left:1047.4px;top:1048.6px;" width="12" height="6.6" viewBox="0 0 12 6.6"><path d="M0 0H12L6 6.6Z" fill="#f4f4f4"/></svg>
<div style="left:745.9px;top:1073.7px;width:742.8px;height:39.5px;background:#2d2d2d;"></div>
<svg style="left:758.1px;top:1089.4px;" width="13.6" height="10.2" viewBox="0 0 13.6 10.2"><path d="M0 0H13.6L6.8 10.2Z" fill="#8a8a8a"/></svg>
<div class="t" style="left:782.3px;top:1072px;width:706.4px;height:39.5px;line-height:39.5px;color:#fff;font-size:20.5px;letter-spacing:0.26px;">Transition</div>
<div style="left:745.9px;top:1115.3px;width:148.8px;height:39.5px;background:#161514;"></div>
<div style="left:896.4px;top:1115.3px;width:550.2px;height:39.5px;background:#161514;"></div>
<div class="t" style="left:745.9px;top:1113.6px;width:141.6px;height:39.5px;line-height:39.5px;color:#fff;font-size:20.5px;text-align:right;letter-spacing:-0.29px;margin-left:-0.29px;">Blend Mode</div>
<div class="t" style="left:905.9px;top:1113.6px;width:140px;height:39.5px;line-height:39.5px;color:#fff;font-size:20.5px;letter-spacing:-0.11px;">Alpha</div>
<svg style="left:1002.9px;top:1131.7px;" width="12" height="6.6" viewBox="0 0 12 6.6"><path d="M0 0H12L6 6.6Z" fill="#f4f4f4"/></svg>
<div style="left:1448.4px;top:1115.3px;width:40.3px;height:39.5px;background:#161514;"></div>
<div class="t" style="left:1448.4px;top:1115.3px;width:34.3px;height:39.5px;line-height:39.5px;color:#fff;font-size:20.5px;text-align:center;">P</div>
<svg style="left:1471.7px;top:1139.9px;" width="5" height="3.4" viewBox="0 0 5 3.4"><path d="M0 0H5L2.5 3.4Z" fill="#f4f4f4"/></svg>
<div style="left:745.9px;top:1156.9px;width:148.8px;height:39.5px;background:#161514;"></div>
<div style="left:896.4px;top:1156.9px;width:592.3px;height:39.5px;background:#161514;"></div>
<div class="t" style="left:745.9px;top:1155.2px;width:138.2px;height:39.5px;line-height:39.5px;color:#fff;font-size:20.5px;text-align:right;letter-spacing:0.50px;margin-left:0.50px;">Duration</div>
<div class="t" style="left:905.9px;top:1155.2px;width:140px;height:39.5px;line-height:39.5px;color:#fff;font-size:20.5px;letter-spacing:-0.92px;">0 s</div>
<svg style="left:991.9px;top:1169.3px;" width="12" height="12" viewBox="0 0 12 12"><path d="M1.2 6H10.8" stroke="#f4f4f4" stroke-width="2.9"/></svg>
<svg style="left:1029.5px;top:1168.3px;" width="14" height="14" viewBox="0 0 14 14"><path d="M1.5 7H12.5M7 1.5V12.5" stroke="#f4f4f4" stroke-width="2.9"/></svg>
<div style="left:745.9px;top:1198.5px;width:700.7px;height:39.5px;background:#1b4856;"></div>
<svg style="left:758.1px;top:1214.2px;" width="13.6" height="10.2" viewBox="0 0 13.6 10.2"><path d="M0 0H13.6L6.8 10.2Z" fill="#8a8a8a"/></svg>
<div class="t" style="left:782.3px;top:1196.8px;width:664.3px;height:39.5px;line-height:39.5px;color:#fff;font-size:20.5px;letter-spacing:0.33px;">Transform</div>
<div style="left:1448.4px;top:1198.5px;width:40.3px;height:39.5px;background:#1f5a6d;"></div>
<div class="t" style="left:1448.4px;top:1198.5px;width:34.3px;height:39.5px;line-height:39.5px;color:#fff;font-size:20.5px;text-align:center;">P</div>
<svg style="left:1471.7px;top:1223.1px;" width="5" height="3.4" viewBox="0 0 5 3.4"><path d="M0 0H5L2.5 3.4Z" fill="#f4f4f4"/></svg>
<div style="left:745.9px;top:1240.1px;width:148.8px;height:39.5px;background:#161514;"></div>
<div style="left:896.4px;top:1240.1px;width:592.3px;height:39.5px;background:#161514;"></div>
<div class="t" style="left:745.9px;top:1238.4px;width:138.2px;height:39.5px;line-height:39.5px;color:#fff;font-size:20.5px;text-align:right;letter-spacing:-0.08px;margin-left:-0.08px;">Position X</div>
<div class="t" style="left:905.9px;top:1238.4px;width:140px;height:39.5px;line-height:39.5px;color:#fff;font-size:20.5px;letter-spacing:0.20px;">0</div>
<svg style="left:991.9px;top:1252.5px;" width="12" height="12" viewBox="0 0 12 12"><path d="M1.2 6H10.8" stroke="#f4f4f4" stroke-width="2.9"/></svg>
<svg style="left:1029.5px;top:1251.5px;" width="14" height="14" viewBox="0 0 14 14"><path d="M1.5 7H12.5M7 1.5V12.5" stroke="#f4f4f4" stroke-width="2.9"/></svg>
<div style="left:745.9px;top:1281.6px;width:148.8px;height:39.5px;background:#161514;"></div>
<div style="left:896.4px;top:1281.6px;width:592.3px;height:39.5px;background:#161514;"></div>
<div class="t" style="left:745.9px;top:1279.9px;width:138.2px;height:39.5px;line-height:39.5px;color:#fff;font-size:20.5px;text-align:right;letter-spacing:-0.04px;margin-left:-0.04px;">Position Y</div>
<div class="t" style="left:905.9px;top:1279.9px;width:140px;height:39.5px;line-height:39.5px;color:#fff;font-size:20.5px;letter-spacing:0.20px;">0</div>
<svg style="left:991.9px;top:1294.1px;" width="12" height="12" viewBox="0 0 12 12"><path d="M1.2 6H10.8" stroke="#f4f4f4" stroke-width="2.9"/></svg>
<svg style="left:1029.5px;top:1293.1px;" width="14" height="14" viewBox="0 0 14 14"><path d="M1.5 7H12.5M7 1.5V12.5" stroke="#f4f4f4" stroke-width="2.9"/></svg>
<div style="left:745.9px;top:1323.2px;width:148.8px;height:39.5px;background:#161514;"></div>
<div style="left:896.4px;top:1323.2px;width:592.3px;height:39.5px;background:#161514;"></div>
<svg style="left:759.9px;top:1335.7px;" width="10" height="13.4" viewBox="0 0 10 13.4"><path d="M0 0V13.4L10 6.7Z" fill="#8a8a8a"/></svg>
<div class="t" style="left:782.3px;top:1321.5px;width:112.4px;height:39.5px;line-height:39.5px;color:#fff;font-size:20.5px;letter-spacing:-1.07px;">Scale</div>
<div class="t" style="left:905.9px;top:1321.5px;width:140px;height:39.5px;line-height:39.5px;color:#fff;font-size:20.5px;letter-spacing:-1.06px;">100 %</div>
<svg style="left:991.9px;top:1335.7px;" width="12" height="12" viewBox="0 0 12 12"><path d="M1.2 6H10.8" stroke="#f4f4f4" stroke-width="2.9"/></svg>
<svg style="left:1029.5px;top:1334.7px;" width="14" height="14" viewBox="0 0 14 14"><path d="M1.5 7H12.5M7 1.5V12.5" stroke="#f4f4f4" stroke-width="2.9"/></svg>
<div style="left:1071.3px;top:1328.4px;width:405.5px;height:29.5px;background:#0a0a0a;"></div>
<div style="left:1071.3px;top:1328.4px;width:39.7px;height:29.5px;background:#2d2d2d;"></div>
<div style="left:1111px;top:1328.4px;width:6.8px;height:29.5px;background:#22708a;"></div>
<div style="left:745.9px;top:1364.8px;width:148.8px;height:39.5px;background:#161514;"></div>
<div style="left:896.4px;top:1364.8px;width:592.3px;height:39.5px;background:#161514;"></div>
<svg style="left:759.9px;top:1377.3px;" width="10" height="13.4" viewBox="0 0 10 13.4"><path d="M0 0V13.4L10 6.7Z" fill="#8a8a8a"/></svg>
<div class="t" style="left:782.3px;top:1363.1px;width:112.4px;height:39.5px;line-height:39.5px;color:#fff;font-size:20.5px;letter-spacing:0.29px;">Rotation</div>
<div class="t" style="left:905.9px;top:1363.1px;width:140px;height:39.5px;line-height:39.5px;color:#fff;font-size:20.5px;letter-spacing:-1.15px;">0 °</div>
<svg style="left:991.9px;top:1377.3px;" width="12" height="12" viewBox="0 0 12 12"><path d="M1.2 6H10.8" stroke="#f4f4f4" stroke-width="2.9"/></svg>
<svg style="left:1029.5px;top:1376.3px;" width="14" height="14" viewBox="0 0 14 14"><path d="M1.5 7H12.5M7 1.5V12.5" stroke="#f4f4f4" stroke-width="2.9"/></svg>
<div style="left:1071.3px;top:1370px;width:405.5px;height:29.5px;background:#0a0a0a;"></div>
<div style="left:1270.6px;top:1370px;width:6.8px;height:29.5px;background:#22708a;"></div>
<div style="left:745.9px;top:1406.4px;width:148.8px;height:39.5px;background:#161514;"></div>
<div style="left:896.4px;top:1406.4px;width:592.3px;height:39.5px;background:#161514;"></div>
<svg style="left:759.9px;top:1418.9px;" width="10" height="13.4" viewBox="0 0 10 13.4"><path d="M0 0V13.4L10 6.7Z" fill="#8a8a8a"/></svg>
<div class="t" style="left:782.3px;top:1404.7px;width:112.4px;height:39.5px;line-height:39.5px;color:#fff;font-size:20.5px;letter-spacing:0.25px;">Anchor</div>
<div class="t" style="left:905.9px;top:1404.7px;width:140px;height:39.5px;line-height:39.5px;color:#fff;font-size:20.5px;letter-spacing:0.20px;">0</div>
<svg style="left:991.9px;top:1418.9px;" width="12" height="12" viewBox="0 0 12 12"><path d="M1.2 6H10.8" stroke="#f4f4f4" stroke-width="2.9"/></svg>
<svg style="left:1029.5px;top:1417.9px;" width="14" height="14" viewBox="0 0 14 14"><path d="M1.5 7H12.5M7 1.5V12.5" stroke="#f4f4f4" stroke-width="2.9"/></svg>
<div style="left:1071.3px;top:1411.6px;width:405.5px;height:29.5px;background:#0a0a0a;"></div>
<div style="left:1270.6px;top:1411.6px;width:6.8px;height:29.5px;background:#22708a;"></div>
<div class="t" style="left:745.9px;top:1618px;width:742.8px;height:32px;line-height:32px;color:#303030;font-size:19.5px;text-align:center;letter-spacing:0.61px;padding-left:0.61px;">Drop effect or mask. Double click to search.</div>
<div style="left:1493.9px;top:514.2px;width:742.9px;height:39.7px;background:#2d2d2d;border-radius:5px 5px 0 0;"></div>
<div class="t" style="left:1493.9px;top:512.4px;width:742.9px;height:39.7px;line-height:39.7px;color:#e6e6e6;font-size:20.5px;text-align:center;letter-spacing:0.40px;padding-left:0.40px;">Clip</div>
<div style="left:1493.9px;top:555.5px;width:742.9px;height:1268.1px;background:#0a0a0a;"></div>
<div style="left:1493.9px;top:555.5px;width:742.9px;height:58.5px;background:#555;overflow:hidden;"><svg style="left:0;top:-181.7px;filter:blur(5px);" width="742.9" height="417.9"><use href="#tp" width="742.9" height="417.9"/></svg></div>
<div style="left:1506.5px;top:566px;width:215.5px;height:37.5px;background:rgba(0,0,0,.72);border-radius:5px;"></div>
<div class="t" style="left:1516.5px;top:565px;width:283.5px;height:37.5px;line-height:37.5px;color:#fff;font-size:21px;transform:scaleX(0.887);transform-origin:left center;">Test Pattern Modern A1</div>
<svg style="left:2151.6px;top:575.2px;" width="24" height="24" viewBox="0 0 24 24"><circle cx="10" cy="10" r="6.5" fill="none" stroke="#d0d0d0" stroke-width="3.9"/><path d="M15 15L20.8 20.3" stroke="#d0d0d0" stroke-width="4" stroke-linecap="round"/></svg>
<svg style="left:2191.6px;top:573.8px;" width="24" height="24" viewBox="-12 -12 24 24"><path d="M10.09 -1.52L10.09 1.52L7.38 1.83L6.51 3.92L8.20 6.06L6.06 8.20L3.92 6.51L1.83 7.38L1.52 10.09L-1.52 10.09L-1.83 7.38L-3.92 6.51L-6.06 8.20L-8.20 6.06L-6.51 3.92L-7.38 1.83L-10.09 1.52L-10.09 -1.52L-7.38 -1.83L-6.51 -3.92L-8.20 -6.06L-6.06 -8.20L-3.92 -6.51L-1.83 -7.38L-1.52 -10.09L1.52 -10.09L1.83 -7.38L3.92 -6.51L6.06 -8.20L8.20 -6.06L6.51 -3.92L7.38 -1.83ZM4.30 0A4.30 4.30 0 1 0 -4.30 0A4.30 4.30 0 1 0 4.30 0Z" fill="#d0d0d0" fill-rule="evenodd" stroke="#d0d0d0" stroke-width="1" stroke-linejoin="round" transform="scale(1.0)"/></svg>
<div style="left:1493.9px;top:616.2px;width:742.9px;height:39.5px;background:#2d2d2d;"></div>
<svg style="left:1507.9px;top:628.6px;" width="10" height="13.4" viewBox="0 0 10 13.4"><path d="M0 0V13.4L10 6.7Z" fill="#8a8a8a"/></svg>
<div class="t" style="left:1530.3px;top:614.5px;width:706.5px;height:39.5px;line-height:39.5px;color:#fff;font-size:20.5px;letter-spacing:0.24px;">Dashboard</div>
<div style="left:1493.9px;top:657.8px;width:742.9px;height:39.5px;background:#2d2d2d;"></div>
<svg style="left:1506.1px;top:673.5px;" width="13.6" height="10.2" viewBox="0 0 13.6 10.2"><path d="M0 0H13.6L6.8 10.2Z" fill="#8a8a8a"/></svg>
<div class="t" style="left:1530.3px;top:656.1px;width:706.5px;height:39.5px;line-height:39.5px;color:#fff;font-size:20.5px;letter-spacing:0.38px;">Transport</div>
<div class="t" style="left:2000px;top:656.1px;width:188.5px;height:39.5px;line-height:39.5px;color:#fff;font-size:20.5px;text-align:right;letter-spacing:0.33px;margin-left:0.33px;">Timeline</div>
<svg style="left:2208.2px;top:674.1px;" width="12.5" height="6.8" viewBox="0 0 12.5 6.8"><path d="M0 0H12.5L6.2 6.8Z" fill="#f4f4f4"/></svg>
<div style="left:1493.9px;top:699.4px;width:148.8px;height:39.5px;background:#161514;"></div>
<div style="left:1644.4px;top:699.4px;width:592.4px;height:39.5px;background:#161514;"></div>
<div class="t" style="left:1493.9px;top:697.7px;width:138.2px;height:39.5px;line-height:39.5px;color:#fff;font-size:20.5px;text-align:right;letter-spacing:0.50px;margin-left:0.50px;">Duration</div>
<div class="t" style="left:1653.9px;top:697.7px;width:140px;height:39.5px;line-height:39.5px;color:#fff;font-size:20.5px;letter-spacing:-1.27px;">1 s</div>
<svg style="left:1739.9px;top:711.8px;" width="12" height="12" viewBox="0 0 12 12"><path d="M1.2 6H10.8" stroke="#f4f4f4" stroke-width="2.9"/></svg>
<svg style="left:1777.5px;top:710.8px;" width="14" height="14" viewBox="0 0 14 14"><path d="M1.5 7H12.5M7 1.5V12.5" stroke="#f4f4f4" stroke-width="2.9"/></svg>
<div class="t" style="left:1815.4px;top:698.2px;width:33.5px;height:39.5px;line-height:39.5px;color:#fff;font-size:20.5px;">/2</div>
<div class="t" style="left:1852.4px;top:698.2px;width:41.5px;height:39.5px;line-height:39.5px;color:#fff;font-size:20.5px;">×2</div>
<div style="left:1493.9px;top:741px;width:742.9px;height:39.5px;background:#2d2d2d;"></div>
<svg style="left:1507.9px;top:753.4px;" width="10" height="13.4" viewBox="0 0 10 13.4"><path d="M0 0V13.4L10 6.7Z" fill="#8a8a8a"/></svg>
<div class="t" style="left:1530.3px;top:739.3px;width:706.5px;height:39.5px;line-height:39.5px;color:#fff;font-size:20.5px;letter-spacing:0.65px;">Autopilot</div>
<div style="left:1493.9px;top:782.6px;width:150.4px;height:81.1px;background:#1b4856;"></div>
<div style="left:1646px;top:782.6px;width:590.8px;height:81.1px;background:#1b4856;"></div>
<svg style="left:1506.1px;top:798.6px;" width="13.6" height="10.2" viewBox="0 0 13.6 10.2"><path d="M0 0H13.6L6.8 10.2Z" fill="#8a8a8a"/></svg>
<div style="left:1549.5px;top:789.7px;width:84.3px;height:64.5px;box-sizing:border-box;border:1px solid #7d7d7d;"></div>
<svg style="left:1550.8px;top:799.2px;filter:blur(.5px);" width="81.7" height="46" viewBox="0 0 81.7 46"><use href="#tp" width="81.7" height="46"/></svg>
<div class="t" style="left:1658.6px;top:782.6px;width:441.4px;height:27px;line-height:27px;color:#9aa6aa;font-size:18.5px;letter-spacing:0.05px;">Test Pattern Modern A1.jpg</div>
<div class="t" style="left:1658.6px;top:808px;width:441.4px;height:27px;line-height:27px;color:#9aa6aa;font-size:18.5px;letter-spacing:-1.01px;">JPEG, 1920x1080</div>
<svg style="left:2163.8px;top:795.3px;" width="18" height="18" viewBox="0 0 18 18"><path d="M5 13L13 5" stroke="#f4f4f4" stroke-width="3.4"/><path d="M8.600 1.300H16.700V9.400ZM1.300 8.600V16.700H9.400Z" fill="#f4f4f4"/></svg>
<svg style="left:2207.3px;top:795.6px;" width="17.4" height="17.4" viewBox="0 0 17.4 17.4"><path d="M2 2L15.4 15.4M15.4 2L2 15.4" stroke="#f4f4f4" stroke-width="3" fill="none"/></svg>
<div style="left:2119px;top:827.7px;width:82.7px;height:27.2px;background:#5fdaee;border-radius:6px 0 0 6px;"></div>
<div style="left:2201.7px;top:827.7px;width:27.5px;height:27.2px;background:#3a3a38;border-radius:0 6px 6px 0;"></div>
<div class="t" style="left:2118.5px;top:829.3px;width:28px;height:27.2px;line-height:27.2px;color:#111;font-size:16.2px;text-align:center;">R</div>
<div class="t" style="left:2146px;top:829.3px;width:28px;height:27.2px;line-height:27.2px;color:#111;font-size:16.2px;text-align:center;">G</div>
<div class="t" style="left:2173.7px;top:829.3px;width:28px;height:27.2px;line-height:27.2px;color:#111;font-size:16.2px;text-align:center;">B</div>
<div class="t" style="left:2201.3px;top:829.3px;width:28px;height:27.2px;line-height:27.2px;color:#1f1f1f;font-size:16.2px;text-align:center;">A</div>
<div style="left:1493.9px;top:865.7px;width:148.8px;height:39.5px;background:#161514;"></div>
<div style="left:1644.4px;top:865.7px;width:592.4px;height:39.5px;background:#161514;"></div>
<div class="t" style="left:1493.9px;top:864px;width:138.2px;height:39.5px;line-height:39.5px;color:#fff;font-size:20.5px;text-align:right;letter-spacing:0.10px;margin-left:0.10px;">Opacity</div>
<div class="t" style="left:1653.9px;top:864px;width:140px;height:39.5px;line-height:39.5px;color:#fff;font-size:20.5px;letter-spacing:-1.06px;">100 %</div>
<svg style="left:1739.9px;top:878.2px;" width="12" height="12" viewBox="0 0 12 12"><path d="M1.2 6H10.8" stroke="#f4f4f4" stroke-width="2.9"/></svg>
<svg style="left:1777.5px;top:877.2px;" width="14" height="14" viewBox="0 0 14 14"><path d="M1.5 7H12.5M7 1.5V12.5" stroke="#f4f4f4" stroke-width="2.9"/></svg>
<div style="left:1819.3px;top:870.9px;width:405.5px;height:29.5px;background:#2d2d2d;"></div>
<div style="left:2218px;top:870.9px;width:6.8px;height:29.5px;background:#22708a;"></div>
<div style="left:1493.9px;top:907.3px;width:148.8px;height:39.5px;background:#161514;"></div>
<div style="left:1644.4px;top:907.3px;width:592.4px;height:39.5px;background:#161514;"></div>
<div class="t" style="left:1493.9px;top:905.6px;width:138.2px;height:39.5px;line-height:39.5px;color:#fff;font-size:20.5px;text-align:right;letter-spacing:0.55px;margin-left:0.55px;">Width</div>
<div class="t" style="left:1653.9px;top:905.6px;width:140px;height:39.5px;line-height:39.5px;color:#fff;font-size:20.5px;letter-spacing:-0.54px;">1920</div>
<svg style="left:1739.9px;top:919.8px;" width="12" height="12" viewBox="0 0 12 12"><path d="M1.2 6H10.8" stroke="#f4f4f4" stroke-width="2.9"/></svg>
<svg style="left:1777.5px;top:918.8px;" width="14" height="14" viewBox="0 0 14 14"><path d="M1.5 7H12.5M7 1.5V12.5" stroke="#f4f4f4" stroke-width="2.9"/></svg>
<div style="left:1493.9px;top:948.9px;width:148.8px;height:39.5px;background:#161514;"></div>
<div style="left:1644.4px;top:948.9px;width:592.4px;height:39.5px;background:#161514;"></div>
<div class="t" style="left:1493.9px;top:947.2px;width:138.2px;height:39.5px;line-height:39.5px;color:#fff;font-size:20.5px;text-align:right;letter-spacing:0.53px;margin-left:0.53px;">Height</div>
<div class="t" style="left:1653.9px;top:947.2px;width:140px;height:39.5px;line-height:39.5px;color:#fff;font-size:20.5px;letter-spacing:-0.54px;">1080</div>
<svg style="left:1739.9px;top:961.4px;" width="12" height="12" viewBox="0 0 12 12"><path d="M1.2 6H10.8" stroke="#f4f4f4" stroke-width="2.9"/></svg>
<svg style="left:1777.5px;top:960.4px;" width="14" height="14" viewBox="0 0 14 14"><path d="M1.5 7H12.5M7 1.5V12.5" stroke="#f4f4f4" stroke-width="2.9"/></svg>
<div style="left:1493.9px;top:990.5px;width:148.8px;height:39.5px;background:#161514;"></div>
<div style="left:1644.4px;top:990.5px;width:592.4px;height:39.5px;background:#161514;"></div>
<div class="t" style="left:1493.9px;top:988.8px;width:141.6px;height:39.5px;line-height:39.5px;color:#fff;font-size:20.5px;text-align:right;letter-spacing:-0.29px;margin-left:-0.29px;">Blend Mode</div>
<div class="t" style="left:1653.9px;top:988.8px;width:140px;height:39.5px;line-height:39.5px;color:#fff;font-size:20.5px;letter-spacing:0.03px;">Layer Determined</div>
<svg style="left:1838.9px;top:1007px;" width="12" height="6.6" viewBox="0 0 12 6.6"><path d="M0 0H12L6 6.6Z" fill="#f4f4f4"/></svg>
<div style="left:1493.9px;top:1032.1px;width:700.8px;height:39.5px;background:#1b4856;"></div>
<svg style="left:1506.1px;top:1047.9px;" width="13.6" height="10.2" viewBox="0 0 13.6 10.2"><path d="M0 0H13.6L6.8 10.2Z" fill="#8a8a8a"/></svg>
<div class="t" style="left:1530.3px;top:1030.4px;width:664.4px;height:39.5px;line-height:39.5px;color:#fff;font-size:20.5px;letter-spacing:0.33px;">Transform</div>
<div style="left:2196.5px;top:1032.1px;width:40.3px;height:39.5px;background:#1f5a6d;"></div>
<div class="t" style="left:2196.5px;top:1032.1px;width:34.3px;height:39.5px;line-height:39.5px;color:#fff;font-size:20.5px;text-align:center;">P</div>
<svg style="left:2219.8px;top:1056.7px;" width="5" height="3.4" viewBox="0 0 5 3.4"><path d="M0 0H5L2.5 3.4Z" fill="#f4f4f4"/></svg>
<div style="left:1493.9px;top:1073.7px;width:148.8px;height:39.5px;background:#161514;"></div>
<div style="left:1644.4px;top:1073.7px;width:592.4px;height:39.5px;background:#161514;"></div>
<div class="t" style="left:1493.9px;top:1072px;width:138.2px;height:39.5px;line-height:39.5px;color:#fff;font-size:20.5px;text-align:right;letter-spacing:-0.08px;margin-left:-0.08px;">Position X</div>
<div class="t" style="left:1653.9px;top:1072px;width:140px;height:39.5px;line-height:39.5px;color:#fff;font-size:20.5px;letter-spacing:0.20px;">0</div>
<svg style="left:1739.9px;top:1086.1px;" width="12" height="12" viewBox="0 0 12 12"><path d="M1.2 6H10.8" stroke="#f4f4f4" stroke-width="2.9"/></svg>
<svg style="left:1777.5px;top:1085.1px;" width="14" height="14" viewBox="0 0 14 14"><path d="M1.5 7H12.5M7 1.5V12.5" stroke="#f4f4f4" stroke-width="2.9"/></svg>
<div style="left:1493.9px;top:1115.3px;width:148.8px;height:39.5px;background:#161514;"></div>
<div style="left:1644.4px;top:1115.3px;width:592.4px;height:39.5px;background:#161514;"></div>
<div class="t" style="left:1493.9px;top:1113.6px;width:138.2px;height:39.5px;line-height:39.5px;color:#fff;font-size:20.5px;text-align:right;letter-spacing:-0.04px;margin-left:-0.04px;">Position Y</div>
<div class="t" style="left:1653.9px;top:1113.6px;width:140px;height:39.5px;line-height:39.5px;color:#fff;font-size:20.5px;letter-spacing:0.20px;">0</div>
<svg style="left:1739.9px;top:1127.7px;" width="12" height="12" viewBox="0 0 12 12"><path d="M1.2 6H10.8" stroke="#f4f4f4" stroke-width="2.9"/></svg>
<svg style="left:1777.5px;top:1126.7px;" width="14" height="14" viewBox="0 0 14 14"><path d="M1.5 7H12.5M7 1.5V12.5" stroke="#f4f4f4" stroke-width="2.9"/></svg>
<div style="left:1493.9px;top:1156.9px;width:148.8px;height:39.5px;background:#161514;"></div>
<div style="left:1644.4px;top:1156.9px;width:592.4px;height:39.5px;background:#161514;"></div>
<svg style="left:1507.9px;top:1169.3px;" width="10" height="13.4" viewBox="0 0 10 13.4"><path d="M0 0V13.4L10 6.7Z" fill="#8a8a8a"/></svg>
<div class="t" style="left:1530.3px;top:1155.2px;width:112.4px;height:39.5px;line-height:39.5px;color:#fff;font-size:20.5px;letter-spacing:-1.07px;">Scale</div>
<div class="t" style="left:1653.9px;top:1155.2px;width:140px;height:39.5px;line-height:39.5px;color:#fff;font-size:20.5px;letter-spacing:-2.22px;">83.51 %</div>
<svg style="left:1739.9px;top:1169.3px;" width="12" height="12" viewBox="0 0 12 12"><path d="M1.2 6H10.8" stroke="#f4f4f4" stroke-width="2.9"/></svg>
<svg style="left:1777.5px;top:1168.3px;" width="14" height="14" viewBox="0 0 14 14"><path d="M1.5 7H12.5M7 1.5V12.5" stroke="#f4f4f4" stroke-width="2.9"/></svg>
<div style="left:1819.3px;top:1162.1px;width:405.5px;height:29.5px;background:#0a0a0a;"></div>
<div style="left:1819.3px;top:1162.1px;width:32.5px;height:29.5px;background:#2d2d2d;"></div>
<div style="left:1851.8px;top:1162.1px;width:6.8px;height:29.5px;background:#22708a;"></div>
<div style="left:1493.9px;top:1198.5px;width:148.8px;height:39.5px;background:#161514;"></div>
<div style="left:1644.4px;top:1198.5px;width:592.4px;height:39.5px;background:#161514;"></div>
<svg style="left:1507.9px;top:1210.9px;" width="10" height="13.4" viewBox="0 0 10 13.4"><path d="M0 0V13.4L10 6.7Z" fill="#8a8a8a"/></svg>
<div class="t" style="left:1530.3px;top:1196.8px;width:112.4px;height:39.5px;line-height:39.5px;color:#fff;font-size:20.5px;letter-spacing:0.29px;">Rotation</div>
<div class="t" style="left:1653.9px;top:1196.8px;width:140px;height:39.5px;line-height:39.5px;color:#fff;font-size:20.5px;letter-spacing:-1.15px;">0 °</div>
<svg style="left:1739.9px;top:1210.9px;" width="12" height="12" viewBox="0 0 12 12"><path d="M1.2 6H10.8" stroke="#f4f4f4" stroke-width="2.9"/></svg>
<svg style="left:1777.5px;top:1209.9px;" width="14" height="14" viewBox="0 0 14 14"><path d="M1.5 7H12.5M7 1.5V12.5" stroke="#f4f4f4" stroke-width="2.9"/></svg>
<div style="left:1819.3px;top:1203.7px;width:405.5px;height:29.5px;background:#0a0a0a;"></div>
<div style="left:2018.7px;top:1203.7px;width:6.8px;height:29.5px;background:#22708a;"></div>
<div style="left:1493.9px;top:1240.1px;width:148.8px;height:39.5px;background:#161514;"></div>
<div style="left:1644.4px;top:1240.1px;width:592.4px;height:39.5px;background:#161514;"></div>
<svg style="left:1507.9px;top:1252.5px;" width="10" height="13.4" viewBox="0 0 10 13.4"><path d="M0 0V13.4L10 6.7Z" fill="#8a8a8a"/></svg>
<div class="t" style="left:1530.3px;top:1238.4px;width:112.4px;height:39.5px;line-height:39.5px;color:#fff;font-size:20.5px;letter-spacing:0.25px;">Anchor</div>
<div class="t" style="left:1653.9px;top:1238.4px;width:140px;height:39.5px;line-height:39.5px;color:#fff;font-size:20.5px;letter-spacing:0.20px;">0</div>
<svg style="left:1739.9px;top:1252.5px;" width="12" height="12" viewBox="0 0 12 12"><path d="M1.2 6H10.8" stroke="#f4f4f4" stroke-width="2.9"/></svg>
<svg style="left:1777.5px;top:1251.5px;" width="14" height="14" viewBox="0 0 14 14"><path d="M1.5 7H12.5M7 1.5V12.5" stroke="#f4f4f4" stroke-width="2.9"/></svg>
<div style="left:1819.3px;top:1245.3px;width:405.5px;height:29.5px;background:#0a0a0a;"></div>
<div style="left:2018.7px;top:1245.3px;width:6.8px;height:29.5px;background:#22708a;"></div>
<div class="t" style="left:1493.9px;top:1535px;width:742.9px;height:32px;line-height:32px;color:#303030;font-size:19.5px;text-align:center;letter-spacing:0.58px;padding-left:0.58px;">Drop audio, video, mask, source or effect. Double click to search.</div>
<div style="left:2242.2px;top:514.2px;width:144.8px;height:39.7px;background:#2d2d2d;border-radius:5px 5px 0 0;"></div>
<div class="t" style="left:2242.2px;top:512.4px;width:144.8px;height:39.7px;line-height:39.7px;color:#e6e6e6;font-size:20.5px;text-align:center;letter-spacing:-0.07px;padding-left:-0.07px;">Files</div>
<div style="left:2389px;top:514.2px;width:145.2px;height:39.7px;background:#212121;border-radius:5px 5px 0 0;"></div>
<div class="t" style="left:2389px;top:512.4px;width:145.2px;height:39.7px;line-height:39.7px;color:#a0a0a0;font-size:20.5px;text-align:center;letter-spacing:1.03px;padding-left:1.03px;">Compositions</div>
<div style="left:2536.2px;top:514.2px;width:145.5px;height:39.7px;background:#212121;border-radius:5px 5px 0 0;"></div>
<div class="t" style="left:2536.2px;top:512.4px;width:145.5px;height:39.7px;line-height:39.7px;color:#a0a0a0;font-size:20.5px;text-align:center;letter-spacing:0.53px;padding-left:0.53px;">Effects</div>
<div style="left:2683.4px;top:514.2px;width:145.5px;height:39.7px;background:#212121;border-radius:5px 5px 0 0;"></div>
<div class="t" style="left:2683.4px;top:512.4px;width:145.5px;height:39.7px;line-height:39.7px;color:#a0a0a0;font-size:20.5px;text-align:center;letter-spacing:0.38px;padding-left:0.38px;">Sources</div>
<div style="left:2830.9px;top:514.2px;width:153.8px;height:39.7px;background:#212121;border-radius:5px 5px 0 0;"></div>
<div class="t" style="left:2830.9px;top:512.4px;width:153.8px;height:39.7px;line-height:39.7px;color:#a0a0a0;font-size:20.5px;text-align:center;letter-spacing:0.48px;padding-left:0.48px;">Record</div>
<div style="left:2242.2px;top:555.5px;width:742.5px;height:1088.9px;background:#0a0a0a;"></div>
<div style="left:2242.2px;top:555.5px;width:60.2px;height:58.5px;background:#2d2d2d;"></div>
<div style="left:2304px;top:555.5px;width:576.8px;height:58.5px;background:#2d2d2d;"></div>
<div style="left:2882.5px;top:555.5px;width:50.3px;height:58.5px;background:#2d2d2d;"></div>
<div style="left:2934.4px;top:555.5px;width:50.3px;height:58.5px;background:#2d2d2d;"></div>
<svg style="left:2261.3px;top:575px;" width="24" height="22" viewBox="0 0 24 22"><path d="M12 0.5L22.5 11.2H16.2V19a1.6 1.6 0 0 1-1.6 1.6H9.4A1.6 1.6 0 0 1 7.8 19V11.2H1.5Z" fill="#f0f0f0"/></svg>
<div class="t" style="left:2313.5px;top:555.5px;width:86.5px;height:58.5px;line-height:58.5px;color:#fff;font-size:20.5px;">/</div>
<svg style="left:2845.3px;top:578.5px;" width="20" height="15" viewBox="0 0 20 15"><path d="M0 0H20L10 15Z" fill="#f0f0f0"/></svg>
<svg style="left:2896.4px;top:575px;" width="24" height="22" viewBox="0 0 24 22"><path d="M12 21C5 15.5 1.2 11.5 1.2 6.9 1.2 3.6 3.6 1.2 6.6 1.2c2.2 0 4.2 1.2 5.4 3.2 1.200-2 3.200-3.200 5.400-3.200 3 0 5.400 2.400 5.400 5.700 0 4.600-3.800 8.600-10.800 14.100Z" fill="#f0f0f0"/></svg>
<svg style="left:2947.8px;top:575px;" width="22" height="22" viewBox="0 0 22 22"><path d="M0.500 1h8.500v8.500h-8.500zM0.500 12.500h8.500v8.500h-8.500zM11.500 1.500h10v2.800h-10zM11.500 6.500h10v2.800h-10zM11.500 13h10v2.800h-10zM11.500 18h10v2.800h-10z" fill="#f0f0f0"/></svg>
<div style="left:2242.2px;top:616.7px;width:742.5px;height:60.2px;background:#2d2d2d;"></div>
<div style="left:2254px;top:627.3px;width:718.8px;height:38.4px;background:#141414;border-radius:5px;"></div>
<svg style="left:2264.4px;top:635.6px;" width="24" height="24" viewBox="0 0 24 24"><circle cx="10" cy="10" r="6.5" fill="none" stroke="#b4b4b4" stroke-width="3.9"/><path d="M15 15L20.8 20.3" stroke="#b4b4b4" stroke-width="4" stroke-linecap="round"/></svg>
<svg style="left:2247.2px;top:691.6px;" width="10" height="13.4" viewBox="0 0 10 13.4"><path d="M0 0V13.4L10 6.7Z" fill="#8a8a8a"/></svg>
<svg style="left:2272px;top:688.4px;filter:blur(.5px);" width="29" height="21" viewBox="0 0 29 21"><path d="M1.200 3.500a1.200 1.200 0 0 1 1.200-1.200h9.300l1.500 2h13.400a1.200 1.200 0 0 1 1.200 1.200v13.600a1.200 1.200 0 0 1-1.200 1.200H2.400a1.200 1.200 0 0 1-1.200-1.200Z" fill="#c9c9c9"/><path d="M3 2.300h7.500v1.400H3z" fill="#8a8a8a"/></svg>
<div class="t" style="left:2313.3px;top:680.7px;width:286.7px;height:34px;line-height:34px;color:#fff;font-size:20.5px;letter-spacing:0.21px;">Applications</div>
<svg style="left:2247.2px;top:733.1px;" width="10" height="13.4" viewBox="0 0 10 13.4"><path d="M0 0V13.4L10 6.7Z" fill="#8a8a8a"/></svg>
<svg style="left:2272px;top:729.9px;filter:blur(.5px);" width="29" height="21" viewBox="0 0 29 21"><path d="M1.200 3.500a1.200 1.200 0 0 1 1.200-1.200h9.300l1.500 2h13.400a1.200 1.200 0 0 1 1.200 1.200v13.600a1.200 1.200 0 0 1-1.200 1.200H2.400a1.200 1.200 0 0 1-1.200-1.200Z" fill="#c9c9c9"/><path d="M3 2.300h7.500v1.400H3z" fill="#8a8a8a"/></svg>
<div class="t" style="left:2313.3px;top:722.2px;width:286.7px;height:34px;line-height:34px;color:#fff;font-size:20.5px;letter-spacing:0.19px;">Library</div>
<svg style="left:2247.2px;top:774.7px;" width="10" height="13.4" viewBox="0 0 10 13.4"><path d="M0 0V13.4L10 6.7Z" fill="#8a8a8a"/></svg>
<svg style="left:2272px;top:771.5px;filter:blur(.5px);" width="29" height="21" viewBox="0 0 29 21"><path d="M1.200 3.500a1.200 1.200 0 0 1 1.200-1.200h9.300l1.500 2h13.400a1.200 1.200 0 0 1 1.200 1.200v13.600a1.200 1.200 0 0 1-1.200 1.200H2.400a1.200 1.200 0 0 1-1.200-1.200Z" fill="#c9c9c9"/><path d="M3 2.300h7.500v1.400H3z" fill="#8a8a8a"/></svg>
<div class="t" style="left:2313.3px;top:763.8px;width:286.7px;height:34px;line-height:34px;color:#fff;font-size:20.5px;letter-spacing:-0.43px;">System</div>
<svg style="left:2247.2px;top:816.2px;" width="10" height="13.4" viewBox="0 0 10 13.4"><path d="M0 0V13.4L10 6.7Z" fill="#8a8a8a"/></svg>
<svg style="left:2272px;top:813px;filter:blur(.5px);" width="29" height="21" viewBox="0 0 29 21"><path d="M1.200 3.500a1.200 1.200 0 0 1 1.200-1.200h9.300l1.500 2h13.400a1.200 1.200 0 0 1 1.200 1.200v13.600a1.200 1.200 0 0 1-1.200 1.200H2.400a1.200 1.200 0 0 1-1.200-1.200Z" fill="#c9c9c9"/><path d="M3 2.300h7.500v1.400H3z" fill="#8a8a8a"/></svg>
<div class="t" style="left:2313.3px;top:805.3px;width:286.7px;height:34px;line-height:34px;color:#fff;font-size:20.5px;letter-spacing:-0.48px;">Users</div>
<div style="left:2242.2px;top:1650.1px;width:742.5px;height:34.2px;background:#2d2d2d;"></div>
<div class="t" style="left:2242.2px;top:1648.9px;width:742.5px;height:34.2px;line-height:34.2px;color:#fff;font-size:20.5px;padding-left:12.3px;box-sizing:border-box;letter-spacing:-0.05px;">Help</div>
<svg style="left:2959.8px;top:1660.5px;" width="14.4" height="14.4" viewBox="0 0 14.4 14.4"><path d="M2 2L12.4 12.4M12.4 2L2 12.4" stroke="#f4f4f4" stroke-width="2.4" fill="none"/></svg>
<div style="left:2242.2px;top:1686.5px;width:742.5px;height:136.7px;background:#0a0a0a;"></div>
<div class="t" style="left:2254.5px;top:1688px;width:729.5px;height:32px;line-height:32px;color:#d4d4d4;font-size:19.5px;letter-spacing:0.05px;">Move your mouse over the interface element that you would like more info about.</div>
<div style="left:0px;top:1825.8px;width:2988px;height:40.2px;background:#2a2a2a;"></div>
<div class="t" style="left:12px;top:1828px;width:388px;height:37px;line-height:37px;color:#d0d0d0;font-size:20px;letter-spacing:0.21px;">Resolume Avenue 7.21.3</div>
<div class="t" style="left:2900px;top:1831px;width:78.6px;height:34px;line-height:34px;color:#c8c8c8;font-size:19.5px;text-align:right;">15.03</div>
<div style="left:2921.9px;top:1800.6px;width:51.6px;height:51.6px;background:#222;border-radius:26px;"></div>
<svg style="left:2932.7px;top:1811.4px;" width="30" height="30" viewBox="0 0 30 30"><path d="M2 9.500V5.500A3.500 3.500 0 0 1 5.500 2H10M20 2h4.500A3.500 3.500 0 0 1 28 5.500V9.500M28 20v4.500A3.500 3.500 0 0 1 24.500 28H20M10 28H5.500A3.500 3.500 0 0 1 2 24.500V20" fill="none" stroke="#fff" stroke-width="2.400" stroke-linecap="round"/><path d="M8.500 10.500H21.500M8.500 15.200H21.500M8.500 20.500H17.500" stroke="#fff" stroke-width="2.200" stroke-linecap="round"/></svg>
<div class="t" style="left:490px;top:1270px;width:410px;height:80px;line-height:80px;color:#00f000;font-size:70px;letter-spacing:-2.10px;z-index:5;">BEZIER??</div>
</div></body></html>
